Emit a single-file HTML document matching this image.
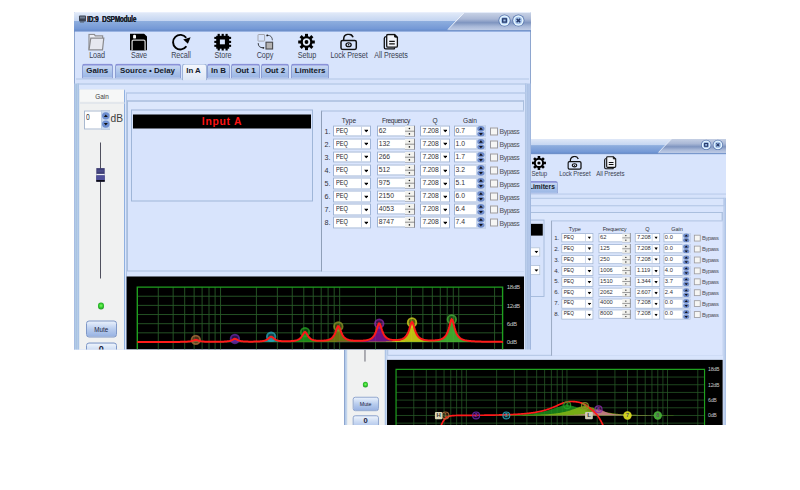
<!DOCTYPE html>
<html><head><meta charset="utf-8"><style>
html,body{margin:0;padding:0;background:#fff;}
body{width:800px;height:490px;overflow:hidden;position:relative;font-family:"Liberation Sans", sans-serif;}
</style></head><body>
<div style="position:absolute;left:344.2px;top:139.2px;width:381.8px;height:285.6px;overflow:hidden;">
<div style="position:absolute;left:0;top:0;width:457px;height:342px;overflow:hidden;background:#d8e4fc;transform-origin:0 0;transform:translate(-1.4px,-0.8px) scale(0.8445,0.8397);font-family:"Liberation Sans", sans-serif;">
<div style="position:absolute;left:0px;top:0px;width:1px;height:342px;background:#8ea6cf;"></div>
<div style="position:absolute;left:456px;top:0px;width:1px;height:342px;background:#8ea6cf;"></div>
<div style="position:absolute;left:0px;top:0px;width:457px;height:18.5px;background:linear-gradient(#e2eaf8 0%,#c4d5f1 44%,#8eaede 46%,#7599d6 85%,#5f88cc 100%);"></div>
<svg style="position:absolute;left:0;top:0" width="457" height="19" viewBox="0 0 457 19">
<defs><linearGradient id="tg2" x1="0" y1="0" x2="0" y2="1">
<stop offset="0" stop-color="#c9d3e6"/><stop offset="0.35" stop-color="#aab8d6"/><stop offset="0.55" stop-color="#7f95c0"/><stop offset="0.75" stop-color="#a8b8d8"/><stop offset="1" stop-color="#c6d2ea"/></linearGradient></defs>
<path d="M390 0 L457 0 L457 18.5 L373 18.5 Z" fill="url(#tg2)"/>
<path d="M390 0.3 L374 17" stroke="#eef3fb" stroke-width="1"/>
<rect x="0" y="17.6" width="457" height="1" fill="#6f90c8"/>
<circle cx="430.5" cy="8" r="6.1" fill="#5a78b0"/>
<circle cx="430.5" cy="8" r="5.2" fill="#e6f6ff"/>
<circle cx="430.5" cy="8" r="3.7" fill="#a6c4ec"/>
<rect x="428.7" y="6.3" width="3.6" height="3.3" fill="none" stroke="#263a6a" stroke-width="1.3"/>
<circle cx="444.4" cy="8" r="6.1" fill="#5a78b0"/>
<circle cx="444.4" cy="8" r="5.2" fill="#e6f6ff"/>
<circle cx="444.4" cy="8" r="3.7" fill="#a6c4ec"/>
<path d="M442.6 6.2 L446.2 9.8 M446.2 6.2 L442.6 9.8" stroke="#263a6a" stroke-width="1.5"/>
</svg>
<div style="position:absolute;left:4.5px;top:2.6px;width:7px;height:6px;background:#3a4252;border-radius:1px;"></div>
<div style="position:absolute;left:5.5px;top:3.6px;width:5px;height:2px;background:#707c90;"></div>
<div style="position:absolute;left:6px;top:8.6px;width:4px;height:1px;background:#505a6a;"></div>
<div style="position:absolute;left:13.4px;top:2.1px;text-align:left;white-space:nowrap;font-size:8.2px;font-weight:bold;color:#141a28;letter-spacing:-0.2px;word-spacing:2.5px;transform:scaleX(0.78);transform-origin:0 0;text-shadow:0.35px 0 0 #141a28;">ID:9 DSPModule</div>
<svg style="position:absolute;left:14.0px;top:20.5px" width="18" height="18" viewBox="0 0 18 18">
<path d="M1 16.3 L1 0.8 L6.3 0.8 L7.3 2.3 L14.6 2.3 L14.6 4.6" fill="#eceef4" stroke="#8e8e92" stroke-width="1.2"/>
<path d="M2.8 4.6 L15.8 4.6 L14.5 16.3 L1 16.3 Z" fill="#e6e8f0" stroke="#8a8a8e" stroke-width="1.2"/>
</svg>
<div style="position:absolute;left:-7.5px;top:37.0px;width:60px;text-align:center;white-space:nowrap;font-size:8.3px;color:#3a4252;letter-spacing:-0.1px;transform:scaleX(0.87);">Load</div>
<svg style="position:absolute;left:56.0px;top:20.5px" width="18" height="18" viewBox="0 0 18 18">
<path d="M0 0 L13.9 0 L17 2.9 L17 16.8 L0 16.8 Z" fill="#000"/>
<rect x="3.1" y="1.2" width="2.9" height="3.9" rx="1.2" fill="#fff"/>
<path d="M2.1 16.8 L2.1 8.2 Q2.1 6.7 3.6 6.7 L13.6 6.7 Q15.1 6.7 15.1 8.2 L15.1 16.8" fill="#000" stroke="#cfcfcf" stroke-width="1.3"/>
</svg>
<div style="position:absolute;left:34.5px;top:37.0px;width:60px;text-align:center;white-space:nowrap;font-size:8.3px;color:#3a4252;letter-spacing:-0.1px;transform:scaleX(0.87);">Save</div>
<svg style="position:absolute;left:98px;top:20.5px" width="19" height="18" viewBox="0 0 19 18">
<path d="M14.4 12.8 A7.3 7.3 0 1 1 14.2 4.3" fill="none" stroke="#000" stroke-width="1.9"/>
<path d="M11.2 5.9 L18.6 3.7 L15.9 10.3 Z" fill="#000"/>
</svg>
<div style="position:absolute;left:77px;top:37.0px;width:60px;text-align:center;white-space:nowrap;font-size:8.3px;color:#3a4252;letter-spacing:-0.1px;transform:scaleX(0.87);">Recall</div>
<svg style="position:absolute;left:140px;top:20.5px" width="18" height="18" viewBox="0 0 18 18">
<rect x="3.6" y="0.2" width="2.2" height="16.8" fill="#000"/><rect x="7.6" y="0.2" width="2.2" height="16.8" fill="#000"/><rect x="11.5" y="0.2" width="2.2" height="16.8" fill="#000"/><rect x="0.3" y="3.3500000000000005" width="16.8" height="2.1" fill="#000"/><rect x="0.3" y="7.3500000000000005" width="16.8" height="2.1" fill="#000"/><rect x="0.3" y="11.25" width="16.8" height="2.1" fill="#000"/><rect x="2.2" y="2.3" width="13" height="12.9" fill="#000"/><rect x="5.9" y="6" width="5" height="4.8" fill="#d8e4fc"/>
</svg>
<div style="position:absolute;left:119px;top:37.0px;width:60px;text-align:center;white-space:nowrap;font-size:8.3px;color:#3a4252;letter-spacing:-0.1px;transform:scaleX(0.87);">Store</div>
<svg style="position:absolute;left:182.5px;top:20.5px" width="18" height="18" viewBox="0 0 18 18">
<rect x="1" y="1" width="6.6" height="6.6" rx="0.5" fill="none" stroke="#a4a6ae" stroke-width="1"/>
<rect x="9" y="8.7" width="6.6" height="6.8" fill="#b4b2b2" stroke="#4a4a4e" stroke-width="1.1"/>
<path d="M10.2 1.8 Q15.2 1.6 15.4 6.8" fill="none" stroke="#555a62" stroke-width="1"/>
<circle cx="10.2" cy="1.9" r="0.9" fill="#222"/>
<path d="M1.2 9.6 Q1.2 14.3 6.2 14.3" fill="none" stroke="#3a3e46" stroke-width="1"/>
<circle cx="6.4" cy="14.3" r="0.9" fill="#222"/>
</svg>
<div style="position:absolute;left:161px;top:37.0px;width:60px;text-align:center;white-space:nowrap;font-size:8.3px;color:#3a4252;letter-spacing:-0.1px;transform:scaleX(0.87);">Copy</div>
<svg style="position:absolute;left:224.0px;top:20.5px" width="17" height="17" viewBox="0 0 17 17">
<rect x="7" y="0.2" width="3" height="4" fill="#000" transform="rotate(0 8.5 8.5)"/><rect x="7" y="0.2" width="3" height="4" fill="#000" transform="rotate(45 8.5 8.5)"/><rect x="7" y="0.2" width="3" height="4" fill="#000" transform="rotate(90 8.5 8.5)"/><rect x="7" y="0.2" width="3" height="4" fill="#000" transform="rotate(135 8.5 8.5)"/><rect x="7" y="0.2" width="3" height="4" fill="#000" transform="rotate(180 8.5 8.5)"/><rect x="7" y="0.2" width="3" height="4" fill="#000" transform="rotate(225 8.5 8.5)"/><rect x="7" y="0.2" width="3" height="4" fill="#000" transform="rotate(270 8.5 8.5)"/><rect x="7" y="0.2" width="3" height="4" fill="#000" transform="rotate(315 8.5 8.5)"/><circle cx="8.5" cy="8.5" r="6.1" fill="#000"/><circle cx="8.5" cy="8.5" r="3.7" fill="#e4ecfa"/><circle cx="8.5" cy="8.5" r="1.9" fill="#000"/>
</svg>
<div style="position:absolute;left:202.5px;top:37.0px;width:60px;text-align:center;white-space:nowrap;font-size:8.3px;color:#3a4252;letter-spacing:-0.1px;transform:scaleX(0.87);">Setup</div>
<svg style="position:absolute;left:266px;top:20.5px" width="18" height="17" viewBox="0 0 18 17">
<path d="M3.7 7 L3.7 5.8 A4.9 4.9 0 0 1 13.1 3.7" fill="none" stroke="#111" stroke-width="1.5"/>
<rect x="1" y="6.9" width="15.3" height="9" rx="1.6" fill="none" stroke="#111" stroke-width="1.5"/>
<ellipse cx="8.6" cy="11.3" rx="2.6" ry="1.9" fill="none" stroke="#111" stroke-width="1.3"/>
<circle cx="8.6" cy="11.3" r="0.7" fill="#111"/>
</svg>
<div style="position:absolute;left:245px;top:37.0px;width:60px;text-align:center;white-space:nowrap;font-size:8.3px;color:#3a4252;letter-spacing:-0.1px;transform:scaleX(0.87);">Lock Preset</div>
<svg style="position:absolute;left:309px;top:20.5px" width="16" height="17" viewBox="0 0 16 17">
<path d="M3 3.2 Q1.3 3.4 1.3 5 L1.3 14 Q1.3 15.3 2.6 15.3 L11.2 15.3 L11.8 14" fill="none" stroke="#111" stroke-width="1.3"/>
<path d="M5 1 L11.6 1 L14.4 3.8 L14.4 12.4 Q14.4 13.7 13.1 13.7 L5 13.7 Q3.7 13.7 3.7 12.4 L3.7 2.3 Q3.7 1 5 1 Z" fill="#f2f4fa" stroke="#111" stroke-width="1.3"/>
<path d="M11.4 1.2 L11.6 3.6 L14.2 3.8" fill="#111" stroke="#111" stroke-width="0.9"/>
<path d="M6.2 7.8 L11.8 7.8 M6.2 10.3 L11.8 10.3" stroke="#111" stroke-width="1.2"/>
</svg>
<div style="position:absolute;left:287px;top:37.0px;width:60px;text-align:center;white-space:nowrap;font-size:8.3px;color:#3a4252;letter-spacing:-0.1px;transform:scaleX(0.87);">All Presets</div>
<div style="position:absolute;left:2px;top:66px;width:452.5px;height:276px;background:#d6e2fb;border-top:1px solid #b4c8e6;"></div>
<div style="position:absolute;left:3px;top:70.5px;width:450px;height:272px;border-top:1px solid #a9bfdf;background:#d9e5fc;"></div>
<div style="position:absolute;left:7.5px;top:51.2px;width:31.5px;height:14.8px;background:linear-gradient(#c9d8f2 0%,#a9c2ea 60%,#9bb6e4 100%);border:1px solid #8d9fd4;border-top:2px solid #8a92d8;border-radius:3px 3px 0 0;box-sizing:border-box;"></div>
<div style="position:absolute;left:7.5px;top:52.9px;width:31.5px;text-align:center;white-space:nowrap;font-size:7.9px;font-weight:bold;color:#141a2a;">Gains</div>
<div style="position:absolute;left:40.5px;top:51.2px;width:66.0px;height:14.8px;background:linear-gradient(#c9d8f2 0%,#a9c2ea 60%,#9bb6e4 100%);border:1px solid #8d9fd4;border-top:2px solid #8a92d8;border-radius:3px 3px 0 0;box-sizing:border-box;"></div>
<div style="position:absolute;left:40.5px;top:52.9px;width:66.0px;text-align:center;white-space:nowrap;font-size:7.9px;font-weight:bold;color:#141a2a;">Source &bull; Delay</div>
<div style="position:absolute;left:108px;top:51px;width:23px;height:16px;background:linear-gradient(#f4f7fc,#dce6f6);border:1px solid #9fb4d8;border-bottom:none;border-radius:3px 3px 0 0;"></div>
<div style="position:absolute;left:108px;top:52.9px;width:23px;text-align:center;white-space:nowrap;font-size:7.9px;font-weight:bold;color:#141a2a;">In A</div>
<div style="position:absolute;left:133px;top:51.2px;width:23px;height:14.8px;background:linear-gradient(#c9d8f2 0%,#a9c2ea 60%,#9bb6e4 100%);border:1px solid #8d9fd4;border-top:2px solid #8a92d8;border-radius:3px 3px 0 0;box-sizing:border-box;"></div>
<div style="position:absolute;left:133px;top:52.9px;width:23px;text-align:center;white-space:nowrap;font-size:7.9px;font-weight:bold;color:#141a2a;">In B</div>
<div style="position:absolute;left:157px;top:51.2px;width:29px;height:14.8px;background:linear-gradient(#c9d8f2 0%,#a9c2ea 60%,#9bb6e4 100%);border:1px solid #8d9fd4;border-top:2px solid #8a92d8;border-radius:3px 3px 0 0;box-sizing:border-box;"></div>
<div style="position:absolute;left:157px;top:52.9px;width:29px;text-align:center;white-space:nowrap;font-size:7.9px;font-weight:bold;color:#141a2a;">Out 1</div>
<div style="position:absolute;left:187px;top:51.2px;width:28px;height:14.8px;background:linear-gradient(#c9d8f2 0%,#a9c2ea 60%,#9bb6e4 100%);border:1px solid #8d9fd4;border-top:2px solid #8a92d8;border-radius:3px 3px 0 0;box-sizing:border-box;"></div>
<div style="position:absolute;left:187px;top:52.9px;width:28px;text-align:center;white-space:nowrap;font-size:7.9px;font-weight:bold;color:#141a2a;">Out 2</div>
<div style="position:absolute;left:217px;top:51.2px;width:38px;height:14.8px;background:linear-gradient(#c9d8f2 0%,#a9c2ea 60%,#9bb6e4 100%);border:1px solid #8d9fd4;border-top:2px solid #8a92d8;border-radius:3px 3px 0 0;box-sizing:border-box;"></div>
<div style="position:absolute;left:217px;top:52.9px;width:38px;text-align:center;white-space:nowrap;font-size:7.9px;font-weight:bold;color:#141a2a;">Limiters</div>
<div style="position:absolute;left:0px;top:70.5px;width:5px;height:272px;background:linear-gradient(90deg,#9fb2dc 0px,#b2cceb 1.2px,#aac4de 2.6px,#b6cceb 3.6px,#a3bfe2 5px);"></div>
<div style="position:absolute;left:450.5px;top:70.5px;width:6.5px;height:272px;background:linear-gradient(90deg,#a9bfe4 0px,#b9cdec 1.5px,#a8bee2 3px,#bccfee 4px,#a6bce2 5.2px,#8ea6cf 6.5px);"></div>
<div style="position:absolute;left:5px;top:76.5px;width:46px;height:266px;background:#f0f1f1;border-left:1px solid #dfe8f0;border-top:1px solid #c8d6ec;border-right:1px solid #8fb0e0;box-sizing:border-box;"></div>
<div style="position:absolute;left:5.6px;top:77.2px;width:44.6px;height:12.3px;background:#f6f7f7;"></div>
<div style="position:absolute;left:5.6px;top:89.5px;width:45px;height:1px;background:#d6dee8;"></div>
<div style="position:absolute;left:5px;top:80.2px;width:46px;text-align:center;white-space:nowrap;font-size:6.4px;color:#404040;">Gain</div>
<div style="position:absolute;left:10px;top:97.8px;width:26px;height:19.3px;background:#fff;border:1px solid #a9b9d0;box-sizing:border-box;"></div>
<div style="position:absolute;left:11.6px;top:98.6px;text-align:left;white-space:nowrap;font-size:8.4px;color:#333;transform:scaleX(0.8);transform-origin:0 0;">0</div>
<svg style="position:absolute;left:26.5px;top:98px" width="9.5" height="19" viewBox="0 0 9.5 19">
<rect x="0" y="0" width="9.5" height="19" fill="#c8d8ee" stroke="#9fb4d4" stroke-width="0.6"/>
<ellipse cx="4.8" cy="5.3" rx="3.8" ry="3.6" fill="#6d8ed0"/><path d="M2.8 6.5 L4.8 4 L6.8 6.5 Z" fill="#111"/>
<ellipse cx="4.8" cy="13.6" rx="3.8" ry="3.6" fill="#6d8ed0"/><path d="M2.8 12.4 L4.8 15 L6.8 12.4 Z" fill="#111"/>
</svg>
<div style="position:absolute;left:36.6px;top:99.5px;text-align:left;white-space:nowrap;font-size:10.2px;color:#404040;">dB</div>
<div style="position:absolute;left:26.1px;top:129.8px;width:1.3px;height:136.7px;background:#50505e;"></div>
<svg style="position:absolute;left:22.2px;top:155.3px" width="9" height="14.5" viewBox="0 0 9 14.5">
<rect x="0.3" y="0.6" width="8.4" height="13.6" fill="#3c3c72"/><rect x="1.2" y="2.2" width="6.6" height="2.6" fill="#4a4a88"/><rect x="0.3" y="6.4" width="8.4" height="1.5" fill="#eceef4"/><rect x="0.3" y="7.9" width="8.4" height="4.6" fill="#50509a"/><rect x="0.3" y="12.5" width="8.4" height="1.7" fill="#0c0c18"/>
</svg>
<div style="position:absolute;left:23.5px;top:290px;width:6.5px;height:6.5px;border-radius:50%;background:radial-gradient(circle at 50% 45%,#7cff5c 0%,#2cc42c 45%,#2a6a2a 100%);"></div>
<div style="position:absolute;left:12px;top:308.3px;width:30.5px;height:16.7px;background:linear-gradient(#e8f0fc 0%,#b9cdee 50%,#98b2e2 100%);border:1px solid #7f98c8;border-radius:3px;box-sizing:border-box;"></div>
<div style="position:absolute;left:12px;top:312.5px;width:30.5px;text-align:center;white-space:nowrap;font-size:6.3px;color:#1a2240;">Mute</div>
<div style="position:absolute;left:12px;top:329.5px;width:30.5px;height:16.7px;background:linear-gradient(#eef4fc 0%,#c9d9f2 50%,#a8bfe8 100%);border:1px solid #7f98c8;border-radius:3px;box-sizing:border-box;"></div>
<div style="position:absolute;left:12px;top:330.5px;width:30.5px;text-align:center;white-space:nowrap;font-size:9px;font-weight:bold;color:#1a2240;">0</div>
<div style="position:absolute;left:52px;top:80px;width:399.7px;height:262px;border-top:1px solid #a8bedf;border-left:1px solid #b2c6e4;border-right:1px solid #b2c6e4;box-sizing:border-box;background:#d8e4fc;"></div>
<div style="position:absolute;left:53px;top:88px;width:397px;height:10.4px;border:1px solid #a9bedd;border-bottom:none;box-sizing:border-box;background:#dce7fc;"></div>
<div style="position:absolute;left:53px;top:88px;width:397px;height:170.5px;border:1px solid #a9bedd;box-sizing:border-box;"></div>
<div style="position:absolute;left:57px;top:96.5px;width:181.5px;height:92.5px;border:1px solid #9fb6d8;box-sizing:border-box;background:#d7e3fc;"></div>
<div style="position:absolute;left:59px;top:102px;width:178px;height:13.5px;background:#000;"></div>
<div style="position:absolute;left:59px;top:103.0px;width:178px;text-align:center;white-space:nowrap;font-size:10.3px;font-weight:bold;color:#ff1414;letter-spacing:0.75px;">Input B</div>
<div style="position:absolute;left:207px;top:129.7px;width:26.6px;height:11.4px;background:#fff;border:1px solid #aebfd8;box-sizing:border-box;"></div>
<svg style="position:absolute;left:226.5px;top:133.89999999999998px" width="5" height="3" viewBox="0 0 5 3"><path d="M0 0 L5 0 L2.5 3 Z" fill="#000"/></svg>
<div style="position:absolute;left:207px;top:151.4px;width:26.6px;height:11.4px;background:#fff;border:1px solid #aebfd8;box-sizing:border-box;"></div>
<svg style="position:absolute;left:226.5px;top:155.6px" width="5" height="3" viewBox="0 0 5 3"><path d="M0 0 L5 0 L2.5 3 Z" fill="#000"/></svg>
<div style="position:absolute;left:246.8px;top:98px;width:203.2px;height:160.5px;border-left:1px solid #8f9fb8;border-top:1px solid #a9bedd;box-sizing:border-box;background:#dae5fd;"></div>
<div style="position:absolute;left:250px;top:103.8px;width:50px;text-align:center;white-space:nowrap;font-size:6.6px;color:#303038;">Type</div>
<div style="position:absolute;left:297px;top:103.8px;width:50px;text-align:center;white-space:nowrap;font-size:6.6px;color:#303038;letter-spacing:-0.35px;">Frequency</div>
<div style="position:absolute;left:336px;top:103.8px;width:50px;text-align:center;white-space:nowrap;font-size:6.6px;color:#303038;">Q</div>
<div style="position:absolute;left:371px;top:103.8px;width:50px;text-align:center;white-space:nowrap;font-size:6.6px;color:#303038;">Gain</div>
<div style="position:absolute;left:250.5px;top:113.69999999999999px;text-align:left;white-space:nowrap;font-size:7.2px;color:#303038;">1.</div>
<div style="position:absolute;left:259.3px;top:112.6px;width:37.7px;height:11.8px;background:#fff;border:1px solid #9fb4d6;box-sizing:border-box;"></div>
<div style="position:absolute;left:286.5px;top:113.6px;width:1px;height:9.8px;background:#c4d0e4;"></div>
<div style="position:absolute;left:262.3px;top:114.19999999999999px;text-align:left;white-space:nowrap;font-size:7.1px;color:#202028;transform:scaleX(0.8);transform-origin:0 0;">PEQ</div>
<svg style="position:absolute;left:289.6px;top:117.40px" width="4.5" height="3" viewBox="0 0 4.5 3"><path d="M0 0 L4.5 0 L2.25 3 Z" fill="#000"/></svg>
<div style="position:absolute;left:303.4px;top:112.6px;width:37.6px;height:11.5px;background:#fff;border:1px solid #9fb4d6;box-sizing:border-box;"></div>
<div style="position:absolute;left:304.8px;top:114.0px;text-align:left;white-space:nowrap;font-size:6.8px;color:#303038;">62</div>
<svg style="position:absolute;left:330.8px;top:112.60px" width="10.5" height="11.5" viewBox="0 0 10.5 11.5">
<rect x="0" y="0.5" width="10.5" height="10.5" fill="#f2f2ee"/><rect x="0" y="5.2" width="10" height="1" fill="#909090"/>
<rect x="9.2" y="0" width="1.3" height="11.5" fill="#707078"/><rect x="0" y="10.6" width="10.5" height="0.9" fill="#8a8a90"/>
<circle cx="4.4" cy="3" r="0.8" fill="#222"/><circle cx="4.4" cy="8.4" r="0.8" fill="#222"/></svg>
<div style="position:absolute;left:346px;top:112.6px;width:30.4px;height:11.8px;background:#fff;border:1px solid #9fb4d6;box-sizing:border-box;"></div>
<div style="position:absolute;left:366px;top:113.6px;width:1px;height:9.8px;background:#c4d0e4;"></div>
<div style="position:absolute;left:348.5px;top:114.19999999999999px;text-align:left;white-space:nowrap;font-size:6.8px;color:#303038;letter-spacing:-0.2px;">7.208</div>
<svg style="position:absolute;left:368.9px;top:117.40px" width="4.5" height="3" viewBox="0 0 4.5 3"><path d="M0 0 L4.5 0 L2.25 3 Z" fill="#000"/></svg>
<div style="position:absolute;left:380.3px;top:112.6px;width:31.3px;height:11.8px;background:#fff;border:1px solid #9fb4d6;box-sizing:border-box;"></div>
<div style="position:absolute;left:381.6px;top:113.8px;text-align:left;white-space:nowrap;font-size:6.8px;color:#303038;">0.0</div>
<svg style="position:absolute;left:401.8px;top:112.60px" width="9.8" height="11.8" viewBox="0 0 9.8 11.8">
<rect x="0" y="0" width="9.8" height="11.8" fill="#c9d7ee"/>
<ellipse cx="4.9" cy="3.2" rx="3.6" ry="2.6" fill="#6f8ccb"/><path d="M3 4.2 L4.9 1.8 L6.8 4.2 Z" fill="#101018"/>
<ellipse cx="4.9" cy="8.6" rx="3.6" ry="2.6" fill="#6f8ccb"/><path d="M3 7.6 L4.9 10 L6.8 7.6 Z" fill="#101018"/>
</svg>
<div style="position:absolute;left:416px;top:114.89999999999999px;width:7.8px;height:7.8px;background:#f6f6f4;border:1px solid #9a9aa0;box-sizing:border-box;"></div>
<div style="position:absolute;left:425.6px;top:115.39999999999999px;text-align:left;white-space:nowrap;font-size:6.9px;color:#505058;letter-spacing:-0.5px;">Bypass</div>
<div style="position:absolute;left:250.5px;top:126.73999999999998px;text-align:left;white-space:nowrap;font-size:7.2px;color:#303038;">2.</div>
<div style="position:absolute;left:259.3px;top:125.63999999999999px;width:37.7px;height:11.8px;background:#fff;border:1px solid #9fb4d6;box-sizing:border-box;"></div>
<div style="position:absolute;left:286.5px;top:126.63999999999999px;width:1px;height:9.8px;background:#c4d0e4;"></div>
<div style="position:absolute;left:262.3px;top:127.23999999999998px;text-align:left;white-space:nowrap;font-size:7.1px;color:#202028;transform:scaleX(0.8);transform-origin:0 0;">PEQ</div>
<svg style="position:absolute;left:289.6px;top:130.44px" width="4.5" height="3" viewBox="0 0 4.5 3"><path d="M0 0 L4.5 0 L2.25 3 Z" fill="#000"/></svg>
<div style="position:absolute;left:303.4px;top:125.63999999999999px;width:37.6px;height:11.5px;background:#fff;border:1px solid #9fb4d6;box-sizing:border-box;"></div>
<div style="position:absolute;left:304.8px;top:127.03999999999999px;text-align:left;white-space:nowrap;font-size:6.8px;color:#303038;">125</div>
<svg style="position:absolute;left:330.8px;top:125.64px" width="10.5" height="11.5" viewBox="0 0 10.5 11.5">
<rect x="0" y="0.5" width="10.5" height="10.5" fill="#f2f2ee"/><rect x="0" y="5.2" width="10" height="1" fill="#909090"/>
<rect x="9.2" y="0" width="1.3" height="11.5" fill="#707078"/><rect x="0" y="10.6" width="10.5" height="0.9" fill="#8a8a90"/>
<circle cx="4.4" cy="3" r="0.8" fill="#222"/><circle cx="4.4" cy="8.4" r="0.8" fill="#222"/></svg>
<div style="position:absolute;left:346px;top:125.63999999999999px;width:30.4px;height:11.8px;background:#fff;border:1px solid #9fb4d6;box-sizing:border-box;"></div>
<div style="position:absolute;left:366px;top:126.63999999999999px;width:1px;height:9.8px;background:#c4d0e4;"></div>
<div style="position:absolute;left:348.5px;top:127.23999999999998px;text-align:left;white-space:nowrap;font-size:6.8px;color:#303038;letter-spacing:-0.2px;">7.208</div>
<svg style="position:absolute;left:368.9px;top:130.44px" width="4.5" height="3" viewBox="0 0 4.5 3"><path d="M0 0 L4.5 0 L2.25 3 Z" fill="#000"/></svg>
<div style="position:absolute;left:380.3px;top:125.63999999999999px;width:31.3px;height:11.8px;background:#fff;border:1px solid #9fb4d6;box-sizing:border-box;"></div>
<div style="position:absolute;left:381.6px;top:126.83999999999999px;text-align:left;white-space:nowrap;font-size:6.8px;color:#303038;">0.0</div>
<svg style="position:absolute;left:401.8px;top:125.64px" width="9.8" height="11.8" viewBox="0 0 9.8 11.8">
<rect x="0" y="0" width="9.8" height="11.8" fill="#c9d7ee"/>
<ellipse cx="4.9" cy="3.2" rx="3.6" ry="2.6" fill="#6f8ccb"/><path d="M3 4.2 L4.9 1.8 L6.8 4.2 Z" fill="#101018"/>
<ellipse cx="4.9" cy="8.6" rx="3.6" ry="2.6" fill="#6f8ccb"/><path d="M3 7.6 L4.9 10 L6.8 7.6 Z" fill="#101018"/>
</svg>
<div style="position:absolute;left:416px;top:127.93999999999998px;width:7.8px;height:7.8px;background:#f6f6f4;border:1px solid #9a9aa0;box-sizing:border-box;"></div>
<div style="position:absolute;left:425.6px;top:128.44px;text-align:left;white-space:nowrap;font-size:6.9px;color:#505058;letter-spacing:-0.5px;">Bypass</div>
<div style="position:absolute;left:250.5px;top:139.78px;text-align:left;white-space:nowrap;font-size:7.2px;color:#303038;">3.</div>
<div style="position:absolute;left:259.3px;top:138.68px;width:37.7px;height:11.8px;background:#fff;border:1px solid #9fb4d6;box-sizing:border-box;"></div>
<div style="position:absolute;left:286.5px;top:139.68px;width:1px;height:9.8px;background:#c4d0e4;"></div>
<div style="position:absolute;left:262.3px;top:140.28px;text-align:left;white-space:nowrap;font-size:7.1px;color:#202028;transform:scaleX(0.8);transform-origin:0 0;">PEQ</div>
<svg style="position:absolute;left:289.6px;top:143.48px" width="4.5" height="3" viewBox="0 0 4.5 3"><path d="M0 0 L4.5 0 L2.25 3 Z" fill="#000"/></svg>
<div style="position:absolute;left:303.4px;top:138.68px;width:37.6px;height:11.5px;background:#fff;border:1px solid #9fb4d6;box-sizing:border-box;"></div>
<div style="position:absolute;left:304.8px;top:140.08px;text-align:left;white-space:nowrap;font-size:6.8px;color:#303038;">250</div>
<svg style="position:absolute;left:330.8px;top:138.68px" width="10.5" height="11.5" viewBox="0 0 10.5 11.5">
<rect x="0" y="0.5" width="10.5" height="10.5" fill="#f2f2ee"/><rect x="0" y="5.2" width="10" height="1" fill="#909090"/>
<rect x="9.2" y="0" width="1.3" height="11.5" fill="#707078"/><rect x="0" y="10.6" width="10.5" height="0.9" fill="#8a8a90"/>
<circle cx="4.4" cy="3" r="0.8" fill="#222"/><circle cx="4.4" cy="8.4" r="0.8" fill="#222"/></svg>
<div style="position:absolute;left:346px;top:138.68px;width:30.4px;height:11.8px;background:#fff;border:1px solid #9fb4d6;box-sizing:border-box;"></div>
<div style="position:absolute;left:366px;top:139.68px;width:1px;height:9.8px;background:#c4d0e4;"></div>
<div style="position:absolute;left:348.5px;top:140.28px;text-align:left;white-space:nowrap;font-size:6.8px;color:#303038;letter-spacing:-0.2px;">7.208</div>
<svg style="position:absolute;left:368.9px;top:143.48px" width="4.5" height="3" viewBox="0 0 4.5 3"><path d="M0 0 L4.5 0 L2.25 3 Z" fill="#000"/></svg>
<div style="position:absolute;left:380.3px;top:138.68px;width:31.3px;height:11.8px;background:#fff;border:1px solid #9fb4d6;box-sizing:border-box;"></div>
<div style="position:absolute;left:381.6px;top:139.88px;text-align:left;white-space:nowrap;font-size:6.8px;color:#303038;">0.0</div>
<svg style="position:absolute;left:401.8px;top:138.68px" width="9.8" height="11.8" viewBox="0 0 9.8 11.8">
<rect x="0" y="0" width="9.8" height="11.8" fill="#c9d7ee"/>
<ellipse cx="4.9" cy="3.2" rx="3.6" ry="2.6" fill="#6f8ccb"/><path d="M3 4.2 L4.9 1.8 L6.8 4.2 Z" fill="#101018"/>
<ellipse cx="4.9" cy="8.6" rx="3.6" ry="2.6" fill="#6f8ccb"/><path d="M3 7.6 L4.9 10 L6.8 7.6 Z" fill="#101018"/>
</svg>
<div style="position:absolute;left:416px;top:140.98000000000002px;width:7.8px;height:7.8px;background:#f6f6f4;border:1px solid #9a9aa0;box-sizing:border-box;"></div>
<div style="position:absolute;left:425.6px;top:141.48000000000002px;text-align:left;white-space:nowrap;font-size:6.9px;color:#505058;letter-spacing:-0.5px;">Bypass</div>
<div style="position:absolute;left:250.5px;top:152.82px;text-align:left;white-space:nowrap;font-size:7.2px;color:#303038;">4.</div>
<div style="position:absolute;left:259.3px;top:151.72px;width:37.7px;height:11.8px;background:#fff;border:1px solid #9fb4d6;box-sizing:border-box;"></div>
<div style="position:absolute;left:286.5px;top:152.72px;width:1px;height:9.8px;background:#c4d0e4;"></div>
<div style="position:absolute;left:262.3px;top:153.32px;text-align:left;white-space:nowrap;font-size:7.1px;color:#202028;transform:scaleX(0.8);transform-origin:0 0;">PEQ</div>
<svg style="position:absolute;left:289.6px;top:156.52px" width="4.5" height="3" viewBox="0 0 4.5 3"><path d="M0 0 L4.5 0 L2.25 3 Z" fill="#000"/></svg>
<div style="position:absolute;left:303.4px;top:151.72px;width:37.6px;height:11.5px;background:#fff;border:1px solid #9fb4d6;box-sizing:border-box;"></div>
<div style="position:absolute;left:304.8px;top:153.12px;text-align:left;white-space:nowrap;font-size:6.8px;color:#303038;">1006</div>
<svg style="position:absolute;left:330.8px;top:151.72px" width="10.5" height="11.5" viewBox="0 0 10.5 11.5">
<rect x="0" y="0.5" width="10.5" height="10.5" fill="#f2f2ee"/><rect x="0" y="5.2" width="10" height="1" fill="#909090"/>
<rect x="9.2" y="0" width="1.3" height="11.5" fill="#707078"/><rect x="0" y="10.6" width="10.5" height="0.9" fill="#8a8a90"/>
<circle cx="4.4" cy="3" r="0.8" fill="#222"/><circle cx="4.4" cy="8.4" r="0.8" fill="#222"/></svg>
<div style="position:absolute;left:346px;top:151.72px;width:30.4px;height:11.8px;background:#fff;border:1px solid #9fb4d6;box-sizing:border-box;"></div>
<div style="position:absolute;left:366px;top:152.72px;width:1px;height:9.8px;background:#c4d0e4;"></div>
<div style="position:absolute;left:348.5px;top:153.32px;text-align:left;white-space:nowrap;font-size:6.8px;color:#303038;letter-spacing:-0.2px;">1.119</div>
<svg style="position:absolute;left:368.9px;top:156.52px" width="4.5" height="3" viewBox="0 0 4.5 3"><path d="M0 0 L4.5 0 L2.25 3 Z" fill="#000"/></svg>
<div style="position:absolute;left:380.3px;top:151.72px;width:31.3px;height:11.8px;background:#fff;border:1px solid #9fb4d6;box-sizing:border-box;"></div>
<div style="position:absolute;left:381.6px;top:152.92px;text-align:left;white-space:nowrap;font-size:6.8px;color:#303038;">4.0</div>
<svg style="position:absolute;left:401.8px;top:151.72px" width="9.8" height="11.8" viewBox="0 0 9.8 11.8">
<rect x="0" y="0" width="9.8" height="11.8" fill="#c9d7ee"/>
<ellipse cx="4.9" cy="3.2" rx="3.6" ry="2.6" fill="#6f8ccb"/><path d="M3 4.2 L4.9 1.8 L6.8 4.2 Z" fill="#101018"/>
<ellipse cx="4.9" cy="8.6" rx="3.6" ry="2.6" fill="#6f8ccb"/><path d="M3 7.6 L4.9 10 L6.8 7.6 Z" fill="#101018"/>
</svg>
<div style="position:absolute;left:416px;top:154.02px;width:7.8px;height:7.8px;background:#f6f6f4;border:1px solid #9a9aa0;box-sizing:border-box;"></div>
<div style="position:absolute;left:425.6px;top:154.52px;text-align:left;white-space:nowrap;font-size:6.9px;color:#505058;letter-spacing:-0.5px;">Bypass</div>
<div style="position:absolute;left:250.5px;top:165.85999999999999px;text-align:left;white-space:nowrap;font-size:7.2px;color:#303038;">5.</div>
<div style="position:absolute;left:259.3px;top:164.76px;width:37.7px;height:11.8px;background:#fff;border:1px solid #9fb4d6;box-sizing:border-box;"></div>
<div style="position:absolute;left:286.5px;top:165.76px;width:1px;height:9.8px;background:#c4d0e4;"></div>
<div style="position:absolute;left:262.3px;top:166.35999999999999px;text-align:left;white-space:nowrap;font-size:7.1px;color:#202028;transform:scaleX(0.8);transform-origin:0 0;">PEQ</div>
<svg style="position:absolute;left:289.6px;top:169.56px" width="4.5" height="3" viewBox="0 0 4.5 3"><path d="M0 0 L4.5 0 L2.25 3 Z" fill="#000"/></svg>
<div style="position:absolute;left:303.4px;top:164.76px;width:37.6px;height:11.5px;background:#fff;border:1px solid #9fb4d6;box-sizing:border-box;"></div>
<div style="position:absolute;left:304.8px;top:166.16px;text-align:left;white-space:nowrap;font-size:6.8px;color:#303038;">1510</div>
<svg style="position:absolute;left:330.8px;top:164.76px" width="10.5" height="11.5" viewBox="0 0 10.5 11.5">
<rect x="0" y="0.5" width="10.5" height="10.5" fill="#f2f2ee"/><rect x="0" y="5.2" width="10" height="1" fill="#909090"/>
<rect x="9.2" y="0" width="1.3" height="11.5" fill="#707078"/><rect x="0" y="10.6" width="10.5" height="0.9" fill="#8a8a90"/>
<circle cx="4.4" cy="3" r="0.8" fill="#222"/><circle cx="4.4" cy="8.4" r="0.8" fill="#222"/></svg>
<div style="position:absolute;left:346px;top:164.76px;width:30.4px;height:11.8px;background:#fff;border:1px solid #9fb4d6;box-sizing:border-box;"></div>
<div style="position:absolute;left:366px;top:165.76px;width:1px;height:9.8px;background:#c4d0e4;"></div>
<div style="position:absolute;left:348.5px;top:166.35999999999999px;text-align:left;white-space:nowrap;font-size:6.8px;color:#303038;letter-spacing:-0.2px;">1.344</div>
<svg style="position:absolute;left:368.9px;top:169.56px" width="4.5" height="3" viewBox="0 0 4.5 3"><path d="M0 0 L4.5 0 L2.25 3 Z" fill="#000"/></svg>
<div style="position:absolute;left:380.3px;top:164.76px;width:31.3px;height:11.8px;background:#fff;border:1px solid #9fb4d6;box-sizing:border-box;"></div>
<div style="position:absolute;left:381.6px;top:165.95999999999998px;text-align:left;white-space:nowrap;font-size:6.8px;color:#303038;">3.7</div>
<svg style="position:absolute;left:401.8px;top:164.76px" width="9.8" height="11.8" viewBox="0 0 9.8 11.8">
<rect x="0" y="0" width="9.8" height="11.8" fill="#c9d7ee"/>
<ellipse cx="4.9" cy="3.2" rx="3.6" ry="2.6" fill="#6f8ccb"/><path d="M3 4.2 L4.9 1.8 L6.8 4.2 Z" fill="#101018"/>
<ellipse cx="4.9" cy="8.6" rx="3.6" ry="2.6" fill="#6f8ccb"/><path d="M3 7.6 L4.9 10 L6.8 7.6 Z" fill="#101018"/>
</svg>
<div style="position:absolute;left:416px;top:167.06px;width:7.8px;height:7.8px;background:#f6f6f4;border:1px solid #9a9aa0;box-sizing:border-box;"></div>
<div style="position:absolute;left:425.6px;top:167.56px;text-align:left;white-space:nowrap;font-size:6.9px;color:#505058;letter-spacing:-0.5px;">Bypass</div>
<div style="position:absolute;left:250.5px;top:178.89999999999998px;text-align:left;white-space:nowrap;font-size:7.2px;color:#303038;">6.</div>
<div style="position:absolute;left:259.3px;top:177.79999999999998px;width:37.7px;height:11.8px;background:#fff;border:1px solid #9fb4d6;box-sizing:border-box;"></div>
<div style="position:absolute;left:286.5px;top:178.79999999999998px;width:1px;height:9.8px;background:#c4d0e4;"></div>
<div style="position:absolute;left:262.3px;top:179.39999999999998px;text-align:left;white-space:nowrap;font-size:7.1px;color:#202028;transform:scaleX(0.8);transform-origin:0 0;">PEQ</div>
<svg style="position:absolute;left:289.6px;top:182.60px" width="4.5" height="3" viewBox="0 0 4.5 3"><path d="M0 0 L4.5 0 L2.25 3 Z" fill="#000"/></svg>
<div style="position:absolute;left:303.4px;top:177.79999999999998px;width:37.6px;height:11.5px;background:#fff;border:1px solid #9fb4d6;box-sizing:border-box;"></div>
<div style="position:absolute;left:304.8px;top:179.2px;text-align:left;white-space:nowrap;font-size:6.8px;color:#303038;">2062</div>
<svg style="position:absolute;left:330.8px;top:177.80px" width="10.5" height="11.5" viewBox="0 0 10.5 11.5">
<rect x="0" y="0.5" width="10.5" height="10.5" fill="#f2f2ee"/><rect x="0" y="5.2" width="10" height="1" fill="#909090"/>
<rect x="9.2" y="0" width="1.3" height="11.5" fill="#707078"/><rect x="0" y="10.6" width="10.5" height="0.9" fill="#8a8a90"/>
<circle cx="4.4" cy="3" r="0.8" fill="#222"/><circle cx="4.4" cy="8.4" r="0.8" fill="#222"/></svg>
<div style="position:absolute;left:346px;top:177.79999999999998px;width:30.4px;height:11.8px;background:#fff;border:1px solid #9fb4d6;box-sizing:border-box;"></div>
<div style="position:absolute;left:366px;top:178.79999999999998px;width:1px;height:9.8px;background:#c4d0e4;"></div>
<div style="position:absolute;left:348.5px;top:179.39999999999998px;text-align:left;white-space:nowrap;font-size:6.8px;color:#303038;letter-spacing:-0.2px;">2.607</div>
<svg style="position:absolute;left:368.9px;top:182.60px" width="4.5" height="3" viewBox="0 0 4.5 3"><path d="M0 0 L4.5 0 L2.25 3 Z" fill="#000"/></svg>
<div style="position:absolute;left:380.3px;top:177.79999999999998px;width:31.3px;height:11.8px;background:#fff;border:1px solid #9fb4d6;box-sizing:border-box;"></div>
<div style="position:absolute;left:381.6px;top:178.99999999999997px;text-align:left;white-space:nowrap;font-size:6.8px;color:#303038;">2.4</div>
<svg style="position:absolute;left:401.8px;top:177.80px" width="9.8" height="11.8" viewBox="0 0 9.8 11.8">
<rect x="0" y="0" width="9.8" height="11.8" fill="#c9d7ee"/>
<ellipse cx="4.9" cy="3.2" rx="3.6" ry="2.6" fill="#6f8ccb"/><path d="M3 4.2 L4.9 1.8 L6.8 4.2 Z" fill="#101018"/>
<ellipse cx="4.9" cy="8.6" rx="3.6" ry="2.6" fill="#6f8ccb"/><path d="M3 7.6 L4.9 10 L6.8 7.6 Z" fill="#101018"/>
</svg>
<div style="position:absolute;left:416px;top:180.1px;width:7.8px;height:7.8px;background:#f6f6f4;border:1px solid #9a9aa0;box-sizing:border-box;"></div>
<div style="position:absolute;left:425.6px;top:180.6px;text-align:left;white-space:nowrap;font-size:6.9px;color:#505058;letter-spacing:-0.5px;">Bypass</div>
<div style="position:absolute;left:250.5px;top:191.93999999999997px;text-align:left;white-space:nowrap;font-size:7.2px;color:#303038;">7.</div>
<div style="position:absolute;left:259.3px;top:190.83999999999997px;width:37.7px;height:11.8px;background:#fff;border:1px solid #9fb4d6;box-sizing:border-box;"></div>
<div style="position:absolute;left:286.5px;top:191.83999999999997px;width:1px;height:9.8px;background:#c4d0e4;"></div>
<div style="position:absolute;left:262.3px;top:192.43999999999997px;text-align:left;white-space:nowrap;font-size:7.1px;color:#202028;transform:scaleX(0.8);transform-origin:0 0;">PEQ</div>
<svg style="position:absolute;left:289.6px;top:195.64px" width="4.5" height="3" viewBox="0 0 4.5 3"><path d="M0 0 L4.5 0 L2.25 3 Z" fill="#000"/></svg>
<div style="position:absolute;left:303.4px;top:190.83999999999997px;width:37.6px;height:11.5px;background:#fff;border:1px solid #9fb4d6;box-sizing:border-box;"></div>
<div style="position:absolute;left:304.8px;top:192.23999999999998px;text-align:left;white-space:nowrap;font-size:6.8px;color:#303038;">4000</div>
<svg style="position:absolute;left:330.8px;top:190.84px" width="10.5" height="11.5" viewBox="0 0 10.5 11.5">
<rect x="0" y="0.5" width="10.5" height="10.5" fill="#f2f2ee"/><rect x="0" y="5.2" width="10" height="1" fill="#909090"/>
<rect x="9.2" y="0" width="1.3" height="11.5" fill="#707078"/><rect x="0" y="10.6" width="10.5" height="0.9" fill="#8a8a90"/>
<circle cx="4.4" cy="3" r="0.8" fill="#222"/><circle cx="4.4" cy="8.4" r="0.8" fill="#222"/></svg>
<div style="position:absolute;left:346px;top:190.83999999999997px;width:30.4px;height:11.8px;background:#fff;border:1px solid #9fb4d6;box-sizing:border-box;"></div>
<div style="position:absolute;left:366px;top:191.83999999999997px;width:1px;height:9.8px;background:#c4d0e4;"></div>
<div style="position:absolute;left:348.5px;top:192.43999999999997px;text-align:left;white-space:nowrap;font-size:6.8px;color:#303038;letter-spacing:-0.2px;">7.208</div>
<svg style="position:absolute;left:368.9px;top:195.64px" width="4.5" height="3" viewBox="0 0 4.5 3"><path d="M0 0 L4.5 0 L2.25 3 Z" fill="#000"/></svg>
<div style="position:absolute;left:380.3px;top:190.83999999999997px;width:31.3px;height:11.8px;background:#fff;border:1px solid #9fb4d6;box-sizing:border-box;"></div>
<div style="position:absolute;left:381.6px;top:192.03999999999996px;text-align:left;white-space:nowrap;font-size:6.8px;color:#303038;">0.0</div>
<svg style="position:absolute;left:401.8px;top:190.84px" width="9.8" height="11.8" viewBox="0 0 9.8 11.8">
<rect x="0" y="0" width="9.8" height="11.8" fill="#c9d7ee"/>
<ellipse cx="4.9" cy="3.2" rx="3.6" ry="2.6" fill="#6f8ccb"/><path d="M3 4.2 L4.9 1.8 L6.8 4.2 Z" fill="#101018"/>
<ellipse cx="4.9" cy="8.6" rx="3.6" ry="2.6" fill="#6f8ccb"/><path d="M3 7.6 L4.9 10 L6.8 7.6 Z" fill="#101018"/>
</svg>
<div style="position:absolute;left:416px;top:193.14px;width:7.8px;height:7.8px;background:#f6f6f4;border:1px solid #9a9aa0;box-sizing:border-box;"></div>
<div style="position:absolute;left:425.6px;top:193.64px;text-align:left;white-space:nowrap;font-size:6.9px;color:#505058;letter-spacing:-0.5px;">Bypass</div>
<div style="position:absolute;left:250.5px;top:204.98px;text-align:left;white-space:nowrap;font-size:7.2px;color:#303038;">8.</div>
<div style="position:absolute;left:259.3px;top:203.88px;width:37.7px;height:11.8px;background:#fff;border:1px solid #9fb4d6;box-sizing:border-box;"></div>
<div style="position:absolute;left:286.5px;top:204.88px;width:1px;height:9.8px;background:#c4d0e4;"></div>
<div style="position:absolute;left:262.3px;top:205.48px;text-align:left;white-space:nowrap;font-size:7.1px;color:#202028;transform:scaleX(0.8);transform-origin:0 0;">PEQ</div>
<svg style="position:absolute;left:289.6px;top:208.68px" width="4.5" height="3" viewBox="0 0 4.5 3"><path d="M0 0 L4.5 0 L2.25 3 Z" fill="#000"/></svg>
<div style="position:absolute;left:303.4px;top:203.88px;width:37.6px;height:11.5px;background:#fff;border:1px solid #9fb4d6;box-sizing:border-box;"></div>
<div style="position:absolute;left:304.8px;top:205.28px;text-align:left;white-space:nowrap;font-size:6.8px;color:#303038;">8000</div>
<svg style="position:absolute;left:330.8px;top:203.88px" width="10.5" height="11.5" viewBox="0 0 10.5 11.5">
<rect x="0" y="0.5" width="10.5" height="10.5" fill="#f2f2ee"/><rect x="0" y="5.2" width="10" height="1" fill="#909090"/>
<rect x="9.2" y="0" width="1.3" height="11.5" fill="#707078"/><rect x="0" y="10.6" width="10.5" height="0.9" fill="#8a8a90"/>
<circle cx="4.4" cy="3" r="0.8" fill="#222"/><circle cx="4.4" cy="8.4" r="0.8" fill="#222"/></svg>
<div style="position:absolute;left:346px;top:203.88px;width:30.4px;height:11.8px;background:#fff;border:1px solid #9fb4d6;box-sizing:border-box;"></div>
<div style="position:absolute;left:366px;top:204.88px;width:1px;height:9.8px;background:#c4d0e4;"></div>
<div style="position:absolute;left:348.5px;top:205.48px;text-align:left;white-space:nowrap;font-size:6.8px;color:#303038;letter-spacing:-0.2px;">7.208</div>
<svg style="position:absolute;left:368.9px;top:208.68px" width="4.5" height="3" viewBox="0 0 4.5 3"><path d="M0 0 L4.5 0 L2.25 3 Z" fill="#000"/></svg>
<div style="position:absolute;left:380.3px;top:203.88px;width:31.3px;height:11.8px;background:#fff;border:1px solid #9fb4d6;box-sizing:border-box;"></div>
<div style="position:absolute;left:381.6px;top:205.07999999999998px;text-align:left;white-space:nowrap;font-size:6.8px;color:#303038;">0.0</div>
<svg style="position:absolute;left:401.8px;top:203.88px" width="9.8" height="11.8" viewBox="0 0 9.8 11.8">
<rect x="0" y="0" width="9.8" height="11.8" fill="#c9d7ee"/>
<ellipse cx="4.9" cy="3.2" rx="3.6" ry="2.6" fill="#6f8ccb"/><path d="M3 4.2 L4.9 1.8 L6.8 4.2 Z" fill="#101018"/>
<ellipse cx="4.9" cy="8.6" rx="3.6" ry="2.6" fill="#6f8ccb"/><path d="M3 7.6 L4.9 10 L6.8 7.6 Z" fill="#101018"/>
</svg>
<div style="position:absolute;left:416px;top:206.18px;width:7.8px;height:7.8px;background:#f6f6f4;border:1px solid #9a9aa0;box-sizing:border-box;"></div>
<div style="position:absolute;left:425.6px;top:206.68px;text-align:left;white-space:nowrap;font-size:6.9px;color:#505058;letter-spacing:-0.5px;">Bypass</div>
<svg style="position:absolute;left:0;top:0" width="457" height="342" viewBox="0 0 457 342"><rect x="52.6" y="264" width="397.4" height="90" fill="#000"/><line x1="63.3" y1="284.45" x2="428.6" y2="284.45" stroke="#285a28" stroke-width="0.9"/><line x1="63.3" y1="293.60" x2="428.6" y2="293.60" stroke="#285a28" stroke-width="0.9"/><line x1="63.3" y1="302.75" x2="428.6" y2="302.75" stroke="#285a28" stroke-width="0.9"/><line x1="63.3" y1="311.90" x2="428.6" y2="311.90" stroke="#285a28" stroke-width="0.9"/><line x1="63.3" y1="321.05" x2="428.6" y2="321.05" stroke="#285a28" stroke-width="0.9"/><line x1="63.3" y1="330.20" x2="428.6" y2="330.20" stroke="#285a28" stroke-width="0.9"/><line x1="63.3" y1="339.35" x2="428.6" y2="339.35" stroke="#285a28" stroke-width="0.9"/><line x1="63.3" y1="348.50" x2="428.6" y2="348.50" stroke="#285a28" stroke-width="0.9"/><line x1="84.27" y1="275.29999999999995" x2="84.27" y2="360" stroke="#285a28" stroke-width="0.9"/><line x1="99.15" y1="275.29999999999995" x2="99.15" y2="360" stroke="#285a28" stroke-width="0.9"/><line x1="110.69" y1="275.29999999999995" x2="110.69" y2="360" stroke="#285a28" stroke-width="0.9"/><line x1="120.13" y1="275.29999999999995" x2="120.13" y2="360" stroke="#285a28" stroke-width="0.9"/><line x1="128.10" y1="275.29999999999995" x2="128.10" y2="360" stroke="#285a28" stroke-width="0.9"/><line x1="135.01" y1="275.29999999999995" x2="135.01" y2="360" stroke="#285a28" stroke-width="0.9"/><line x1="141.10" y1="275.29999999999995" x2="141.10" y2="360" stroke="#285a28" stroke-width="0.9"/><line x1="146.55" y1="275.29999999999995" x2="146.55" y2="360" stroke="#285a28" stroke-width="0.9"/><line x1="182.40" y1="275.29999999999995" x2="182.40" y2="360" stroke="#285a28" stroke-width="0.9"/><line x1="203.37" y1="275.29999999999995" x2="203.37" y2="360" stroke="#285a28" stroke-width="0.9"/><line x1="218.25" y1="275.29999999999995" x2="218.25" y2="360" stroke="#285a28" stroke-width="0.9"/><line x1="229.79" y1="275.29999999999995" x2="229.79" y2="360" stroke="#285a28" stroke-width="0.9"/><line x1="239.23" y1="275.29999999999995" x2="239.23" y2="360" stroke="#285a28" stroke-width="0.9"/><line x1="247.20" y1="275.29999999999995" x2="247.20" y2="360" stroke="#285a28" stroke-width="0.9"/><line x1="254.11" y1="275.29999999999995" x2="254.11" y2="360" stroke="#285a28" stroke-width="0.9"/><line x1="260.20" y1="275.29999999999995" x2="260.20" y2="360" stroke="#285a28" stroke-width="0.9"/><line x1="265.65" y1="275.29999999999995" x2="265.65" y2="360" stroke="#285a28" stroke-width="0.9"/><line x1="301.50" y1="275.29999999999995" x2="301.50" y2="360" stroke="#285a28" stroke-width="0.9"/><line x1="322.47" y1="275.29999999999995" x2="322.47" y2="360" stroke="#285a28" stroke-width="0.9"/><line x1="337.35" y1="275.29999999999995" x2="337.35" y2="360" stroke="#285a28" stroke-width="0.9"/><line x1="348.89" y1="275.29999999999995" x2="348.89" y2="360" stroke="#285a28" stroke-width="0.9"/><line x1="358.33" y1="275.29999999999995" x2="358.33" y2="360" stroke="#285a28" stroke-width="0.9"/><line x1="366.30" y1="275.29999999999995" x2="366.30" y2="360" stroke="#285a28" stroke-width="0.9"/><line x1="373.21" y1="275.29999999999995" x2="373.21" y2="360" stroke="#285a28" stroke-width="0.9"/><line x1="379.30" y1="275.29999999999995" x2="379.30" y2="360" stroke="#285a28" stroke-width="0.9"/><line x1="384.75" y1="275.29999999999995" x2="384.75" y2="360" stroke="#285a28" stroke-width="0.9"/><line x1="420.60" y1="275.29999999999995" x2="420.60" y2="360" stroke="#285a28" stroke-width="0.9"/><path d="M63.3 360 L63.3 275.29999999999995 L428.6 275.29999999999995 L428.6 360" fill="none" stroke="#1fa01f" stroke-width="1.4"/><text x="432.7" y="277.60" font-family="Liberation Sans" font-size="6.2" letter-spacing="-0.3" fill="#c4c4c4">18dB</text><text x="432.7" y="295.90" font-family="Liberation Sans" font-size="6.2" letter-spacing="-0.3" fill="#c4c4c4">12dB</text><text x="432.7" y="314.20" font-family="Liberation Sans" font-size="6.2" letter-spacing="-0.3" fill="#c4c4c4">6dB</text><text x="432.7" y="332.50" font-family="Liberation Sans" font-size="6.2" letter-spacing="-0.3" fill="#c4c4c4">0dB</text><path d="M144.63 330.2 L144.63 330.11 L145.37 330.10 L146.10 330.10 L146.83 330.10 L147.57 330.10 L148.30 330.09 L149.03 330.09 L149.76 330.09 L150.50 330.08 L151.23 330.08 L151.96 330.08 L152.69 330.07 L153.43 330.07 L154.16 330.06 L154.89 330.06 L155.63 330.06 L156.36 330.05 L157.09 330.05 L157.82 330.04 L158.56 330.04 L159.29 330.03 L160.02 330.03 L160.75 330.02 L161.49 330.02 L162.22 330.01 L162.95 330.01 L163.69 330.00 L164.42 330.00 L165.15 329.99 L165.88 329.98 L166.62 329.98 L167.35 329.97 L168.08 329.96 L168.81 329.96 L169.55 329.95 L170.28 329.94 L171.01 329.94 L171.75 329.93 L172.48 329.92 L173.21 329.91 L173.94 329.90 L174.68 329.89 L175.41 329.89 L176.14 329.88 L176.87 329.87 L177.61 329.86 L178.34 329.85 L179.07 329.84 L179.81 329.82 L180.54 329.81 L181.27 329.80 L182.00 329.79 L182.74 329.78 L183.47 329.77 L184.20 329.75 L184.93 329.74 L185.67 329.72 L186.40 329.71 L187.13 329.70 L187.87 329.68 L188.60 329.66 L189.33 329.65 L190.06 329.63 L190.80 329.61 L191.53 329.60 L192.26 329.58 L192.99 329.56 L193.73 329.54 L194.46 329.52 L195.19 329.50 L195.93 329.48 L196.66 329.45 L197.39 329.43 L198.12 329.41 L198.86 329.38 L199.59 329.36 L200.32 329.33 L201.06 329.30 L201.79 329.28 L202.52 329.25 L203.25 329.22 L203.99 329.19 L204.72 329.15 L205.45 329.12 L206.18 329.09 L206.92 329.05 L207.65 329.01 L208.38 328.98 L209.12 328.94 L209.85 328.90 L210.58 328.86 L211.31 328.81 L212.05 328.77 L212.78 328.72 L213.51 328.67 L214.24 328.62 L214.98 328.57 L215.71 328.52 L216.44 328.46 L217.18 328.41 L217.91 328.35 L218.64 328.28 L219.37 328.22 L220.11 328.15 L220.84 328.09 L221.57 328.01 L222.30 327.94 L223.04 327.86 L223.77 327.79 L224.50 327.70 L225.24 327.62 L225.97 327.53 L226.70 327.44 L227.43 327.34 L228.17 327.24 L228.90 327.14 L229.63 327.04 L230.36 326.93 L231.10 326.81 L231.83 326.69 L232.56 326.57 L233.30 326.44 L234.03 326.31 L234.76 326.17 L235.49 326.03 L236.23 325.88 L236.96 325.73 L237.69 325.57 L238.42 325.41 L239.16 325.24 L239.89 325.06 L240.62 324.88 L241.36 324.70 L242.09 324.50 L242.82 324.30 L243.55 324.10 L244.29 323.89 L245.02 323.67 L245.75 323.45 L246.48 323.22 L247.22 322.99 L247.95 322.75 L248.68 322.50 L249.42 322.26 L250.15 322.00 L250.88 321.75 L251.61 321.49 L252.35 321.23 L253.08 320.98 L253.81 320.72 L254.55 320.46 L255.28 320.21 L256.01 319.97 L256.74 319.73 L257.48 319.49 L258.21 319.27 L258.94 319.06 L259.67 318.87 L260.41 318.69 L261.14 318.53 L261.87 318.38 L262.61 318.26 L263.34 318.16 L264.07 318.08 L264.80 318.03 L265.54 318.00 L266.27 318.00 L267.00 318.03 L267.73 318.07 L268.47 318.15 L269.20 318.24 L269.93 318.36 L270.67 318.50 L271.40 318.66 L272.13 318.84 L272.86 319.03 L273.60 319.24 L274.33 319.46 L275.06 319.69 L275.79 319.93 L276.53 320.18 L277.26 320.43 L277.99 320.68 L278.73 320.94 L279.46 321.20 L280.19 321.45 L280.92 321.71 L281.66 321.97 L282.39 322.22 L283.12 322.47 L283.85 322.71 L284.59 322.95 L285.32 323.19 L286.05 323.41 L286.79 323.64 L287.52 323.86 L288.25 324.07 L288.98 324.27 L289.72 324.47 L290.45 324.67 L291.18 324.86 L291.91 325.04 L292.65 325.21 L293.38 325.38 L294.11 325.55 L294.85 325.71 L295.58 325.86 L296.31 326.01 L297.04 326.15 L297.78 326.29 L298.51 326.42 L299.24 326.55 L299.97 326.67 L300.71 326.79 L301.44 326.91 L302.17 327.02 L302.91 327.13 L303.64 327.23 L304.37 327.33 L305.10 327.42 L305.84 327.52 L306.57 327.60 L307.30 327.69 L308.03 327.77 L308.77 327.85 L309.50 327.93 L310.23 328.00 L310.97 328.08 L311.70 328.14 L312.43 328.21 L313.16 328.27 L313.90 328.34 L314.63 328.40 L315.36 328.45 L316.10 328.51 L316.83 328.56 L317.56 328.62 L318.29 328.67 L319.03 328.71 L319.76 328.76 L320.49 328.81 L321.22 328.85 L321.96 328.89 L322.69 328.93 L323.42 328.97 L324.16 329.01 L324.89 329.05 L325.62 329.08 L326.35 329.12 L327.09 329.15 L327.82 329.18 L328.55 329.21 L329.28 329.24 L330.02 329.27 L330.75 329.30 L331.48 329.33 L332.22 329.35 L332.95 329.38 L333.68 329.40 L334.41 329.43 L335.15 329.45 L335.88 329.47 L336.61 329.49 L337.34 329.52 L338.08 329.54 L338.81 329.56 L339.54 329.58 L340.28 329.59 L341.01 329.61 L341.74 329.63 L342.47 329.65 L343.21 329.66 L343.94 329.68 L344.67 329.69 L345.40 329.71 L346.14 329.72 L346.87 329.74 L347.60 329.75 L348.34 329.76 L349.07 329.78 L349.80 329.79 L350.53 329.80 L351.27 329.81 L352.00 329.82 L352.73 329.83 L353.46 329.84 L354.20 329.85 L354.93 329.86 L355.66 329.87 L356.40 329.88 L357.13 329.89 L357.86 329.90 L358.59 329.91 L359.33 329.92 L360.06 329.93 L360.79 329.93 L361.52 329.94 L362.26 329.95 L362.99 329.96 L363.72 329.96 L364.46 329.97 L365.19 329.98 L365.92 329.98 L366.65 329.99 L367.39 330.00 L368.12 330.00 L368.85 330.01 L369.59 330.01 L370.32 330.02 L371.05 330.02 L371.78 330.03 L372.52 330.03 L373.25 330.04 L373.98 330.04 L374.71 330.05 L375.45 330.05 L376.18 330.06 L376.91 330.06 L377.65 330.06 L378.38 330.07 L379.11 330.07 L379.84 330.07 L380.58 330.08 L381.31 330.08 L382.04 330.09 L382.77 330.09 L383.51 330.09 L384.24 330.09 L384.97 330.10 L385.71 330.10 L386.44 330.10 L387.17 330.11 L387.17 330.2 Z" fill="rgba(30,150,30,0.8)"/><path d="M176.87 330.2 L176.87 330.11 L177.61 330.10 L178.34 330.10 L179.07 330.10 L179.81 330.10 L180.54 330.09 L181.27 330.09 L182.00 330.09 L182.74 330.08 L183.47 330.08 L184.20 330.08 L184.93 330.07 L185.67 330.07 L186.40 330.06 L187.13 330.06 L187.87 330.06 L188.60 330.05 L189.33 330.05 L190.06 330.04 L190.80 330.04 L191.53 330.03 L192.26 330.03 L192.99 330.02 L193.73 330.02 L194.46 330.01 L195.19 330.01 L195.93 330.00 L196.66 330.00 L197.39 329.99 L198.12 329.98 L198.86 329.98 L199.59 329.97 L200.32 329.96 L201.06 329.96 L201.79 329.95 L202.52 329.94 L203.25 329.93 L203.99 329.92 L204.72 329.92 L205.45 329.91 L206.18 329.90 L206.92 329.89 L207.65 329.88 L208.38 329.87 L209.12 329.86 L209.85 329.85 L210.58 329.84 L211.31 329.83 L212.05 329.82 L212.78 329.80 L213.51 329.79 L214.24 329.78 L214.98 329.77 L215.71 329.75 L216.44 329.74 L217.18 329.72 L217.91 329.71 L218.64 329.69 L219.37 329.68 L220.11 329.66 L220.84 329.64 L221.57 329.63 L222.30 329.61 L223.04 329.59 L223.77 329.57 L224.50 329.55 L225.24 329.53 L225.97 329.51 L226.70 329.48 L227.43 329.46 L228.17 329.44 L228.90 329.41 L229.63 329.38 L230.36 329.36 L231.10 329.33 L231.83 329.30 L232.56 329.27 L233.30 329.24 L234.03 329.21 L234.76 329.17 L235.49 329.14 L236.23 329.10 L236.96 329.06 L237.69 329.02 L238.42 328.98 L239.16 328.94 L239.89 328.90 L240.62 328.85 L241.36 328.80 L242.09 328.75 L242.82 328.70 L243.55 328.65 L244.29 328.59 L245.02 328.53 L245.75 328.47 L246.48 328.41 L247.22 328.34 L247.95 328.27 L248.68 328.20 L249.42 328.13 L250.15 328.05 L250.88 327.97 L251.61 327.88 L252.35 327.79 L253.08 327.70 L253.81 327.60 L254.55 327.50 L255.28 327.39 L256.01 327.28 L256.74 327.17 L257.48 327.05 L258.21 326.92 L258.94 326.79 L259.67 326.65 L260.41 326.51 L261.14 326.36 L261.87 326.20 L262.61 326.04 L263.34 325.87 L264.07 325.69 L264.80 325.50 L265.54 325.31 L266.27 325.11 L267.00 324.90 L267.73 324.68 L268.47 324.46 L269.20 324.22 L269.93 323.98 L270.67 323.73 L271.40 323.48 L272.13 323.21 L272.86 322.94 L273.60 322.67 L274.33 322.39 L275.06 322.11 L275.79 321.82 L276.53 321.54 L277.26 321.26 L277.99 320.98 L278.73 320.71 L279.46 320.44 L280.19 320.19 L280.92 319.95 L281.66 319.73 L282.39 319.54 L283.12 319.36 L283.85 319.21 L284.59 319.09 L285.32 319.00 L286.05 318.94 L286.79 318.92 L287.52 318.92 L288.25 318.97 L288.98 319.04 L289.72 319.15 L290.45 319.28 L291.18 319.45 L291.91 319.64 L292.65 319.85 L293.38 320.07 L294.11 320.32 L294.85 320.58 L295.58 320.85 L296.31 321.12 L297.04 321.40 L297.78 321.69 L298.51 321.97 L299.24 322.25 L299.97 322.53 L300.71 322.81 L301.44 323.08 L302.17 323.35 L302.91 323.61 L303.64 323.86 L304.37 324.11 L305.10 324.34 L305.84 324.57 L306.57 324.79 L307.30 325.01 L308.03 325.21 L308.77 325.41 L309.50 325.60 L310.23 325.78 L310.97 325.95 L311.70 326.12 L312.43 326.28 L313.16 326.44 L313.90 326.58 L314.63 326.72 L315.36 326.86 L316.10 326.99 L316.83 327.11 L317.56 327.23 L318.29 327.34 L319.03 327.45 L319.76 327.55 L320.49 327.65 L321.22 327.75 L321.96 327.84 L322.69 327.92 L323.42 328.01 L324.16 328.09 L324.89 328.16 L325.62 328.24 L326.35 328.31 L327.09 328.38 L327.82 328.44 L328.55 328.50 L329.28 328.56 L330.02 328.62 L330.75 328.67 L331.48 328.73 L332.22 328.78 L332.95 328.83 L333.68 328.87 L334.41 328.92 L335.15 328.96 L335.88 329.00 L336.61 329.04 L337.34 329.08 L338.08 329.12 L338.81 329.15 L339.54 329.19 L340.28 329.22 L341.01 329.25 L341.74 329.29 L342.47 329.31 L343.21 329.34 L343.94 329.37 L344.67 329.40 L345.40 329.42 L346.14 329.45 L346.87 329.47 L347.60 329.49 L348.34 329.52 L349.07 329.54 L349.80 329.56 L350.53 329.58 L351.27 329.60 L352.00 329.62 L352.73 329.64 L353.46 329.65 L354.20 329.67 L354.93 329.69 L355.66 329.70 L356.40 329.72 L357.13 329.73 L357.86 329.75 L358.59 329.76 L359.33 329.77 L360.06 329.79 L360.79 329.80 L361.52 329.81 L362.26 329.82 L362.99 329.83 L363.72 329.84 L364.46 329.86 L365.19 329.87 L365.92 329.88 L366.65 329.88 L367.39 329.89 L368.12 329.90 L368.85 329.91 L369.59 329.92 L370.32 329.93 L371.05 329.94 L371.78 329.94 L372.52 329.95 L373.25 329.96 L373.98 329.97 L374.71 329.97 L375.45 329.98 L376.18 329.99 L376.91 329.99 L377.65 330.00 L378.38 330.00 L379.11 330.01 L379.84 330.02 L380.58 330.02 L381.31 330.03 L382.04 330.03 L382.77 330.04 L383.51 330.04 L384.24 330.05 L384.97 330.05 L385.71 330.05 L386.44 330.06 L387.17 330.06 L387.90 330.07 L388.64 330.07 L389.37 330.07 L390.10 330.08 L390.83 330.08 L391.57 330.08 L392.30 330.09 L393.03 330.09 L393.77 330.09 L394.50 330.10 L395.23 330.10 L395.96 330.10 L396.70 330.11 L397.43 330.11 L397.43 330.2 Z" fill="rgba(150,190,20,0.75)"/><path d="M235.49 330.2 L235.49 330.11 L236.23 330.11 L236.96 330.10 L237.69 330.10 L238.42 330.10 L239.16 330.09 L239.89 330.09 L240.62 330.08 L241.36 330.08 L242.09 330.08 L242.82 330.07 L243.55 330.07 L244.29 330.06 L245.02 330.06 L245.75 330.05 L246.48 330.05 L247.22 330.04 L247.95 330.04 L248.68 330.03 L249.42 330.03 L250.15 330.02 L250.88 330.01 L251.61 330.01 L252.35 330.00 L253.08 329.99 L253.81 329.98 L254.55 329.97 L255.28 329.97 L256.01 329.96 L256.74 329.95 L257.48 329.94 L258.21 329.93 L258.94 329.92 L259.67 329.90 L260.41 329.89 L261.14 329.88 L261.87 329.87 L262.61 329.85 L263.34 329.84 L264.07 329.82 L264.80 329.81 L265.54 329.79 L266.27 329.77 L267.00 329.75 L267.73 329.73 L268.47 329.71 L269.20 329.69 L269.93 329.66 L270.67 329.64 L271.40 329.61 L272.13 329.58 L272.86 329.55 L273.60 329.52 L274.33 329.48 L275.06 329.45 L275.79 329.41 L276.53 329.36 L277.26 329.32 L277.99 329.27 L278.73 329.21 L279.46 329.16 L280.19 329.10 L280.92 329.03 L281.66 328.96 L282.39 328.88 L283.12 328.80 L283.85 328.71 L284.59 328.61 L285.32 328.50 L286.05 328.39 L286.79 328.26 L287.52 328.12 L288.25 327.97 L288.98 327.81 L289.72 327.63 L290.45 327.44 L291.18 327.22 L291.91 327.00 L292.65 326.75 L293.38 326.48 L294.11 326.19 L294.85 325.88 L295.58 325.56 L296.31 325.22 L297.04 324.87 L297.78 324.52 L298.51 324.17 L299.24 323.84 L299.97 323.54 L300.71 323.28 L301.44 323.08 L302.17 322.94 L302.91 322.88 L303.64 322.90 L304.37 323.00 L305.10 323.18 L305.84 323.41 L306.57 323.69 L307.30 324.01 L308.03 324.35 L308.77 324.71 L309.50 325.06 L310.23 325.40 L310.97 325.73 L311.70 326.05 L312.43 326.35 L313.16 326.62 L313.90 326.88 L314.63 327.12 L315.36 327.34 L316.10 327.54 L316.83 327.73 L317.56 327.90 L318.29 328.05 L319.03 328.20 L319.76 328.33 L320.49 328.45 L321.22 328.56 L321.96 328.66 L322.69 328.76 L323.42 328.84 L324.16 328.92 L324.89 329.00 L325.62 329.07 L326.35 329.13 L327.09 329.19 L327.82 329.24 L328.55 329.29 L329.28 329.34 L330.02 329.39 L330.75 329.43 L331.48 329.47 L332.22 329.50 L332.95 329.54 L333.68 329.57 L334.41 329.60 L335.15 329.63 L335.88 329.65 L336.61 329.68 L337.34 329.70 L338.08 329.72 L338.81 329.74 L339.54 329.76 L340.28 329.78 L341.01 329.80 L341.74 329.82 L342.47 329.83 L343.21 329.85 L343.94 329.86 L344.67 329.87 L345.40 329.89 L346.14 329.90 L346.87 329.91 L347.60 329.92 L348.34 329.93 L349.07 329.94 L349.80 329.95 L350.53 329.96 L351.27 329.97 L352.00 329.98 L352.73 329.99 L353.46 329.99 L354.20 330.00 L354.93 330.01 L355.66 330.02 L356.40 330.02 L357.13 330.03 L357.86 330.03 L358.59 330.04 L359.33 330.05 L360.06 330.05 L360.79 330.06 L361.52 330.06 L362.26 330.07 L362.99 330.07 L363.72 330.07 L364.46 330.08 L365.19 330.08 L365.92 330.09 L366.65 330.09 L367.39 330.09 L368.12 330.10 L368.85 330.10 L369.59 330.10 L370.32 330.11 L370.32 330.2 Z" fill="rgba(220,110,170,0.7)"/><path d="M63.30 400.00 L64.03 400.00 L64.77 400.00 L65.50 400.00 L66.23 400.00 L66.96 400.00 L67.70 400.00 L68.43 400.00 L69.16 400.00 L69.89 400.00 L70.63 400.00 L71.36 400.00 L72.09 400.00 L72.83 400.00 L73.56 400.00 L74.29 400.00 L75.02 400.00 L75.76 400.00 L76.49 400.00 L77.22 400.00 L77.95 400.00 L78.69 400.00 L79.42 400.00 L80.15 400.00 L80.89 400.00 L81.62 400.00 L82.35 400.00 L83.08 400.00 L83.82 400.00 L84.55 400.00 L85.28 400.00 L86.01 400.00 L86.75 400.00 L87.48 400.00 L88.21 400.00 L88.95 400.00 L89.68 400.00 L90.41 400.00 L91.14 400.00 L91.88 400.00 L92.61 400.00 L93.34 400.00 L94.08 400.00 L94.81 400.00 L95.54 400.00 L96.27 400.00 L97.01 400.00 L97.74 400.00 L98.47 400.00 L99.20 400.00 L99.94 400.00 L100.67 400.00 L101.40 397.95 L102.14 394.97 L102.87 391.99 L103.60 389.02 L104.33 386.06 L105.07 383.10 L105.80 380.16 L106.53 377.24 L107.26 374.33 L108.00 371.44 L108.73 368.59 L109.46 365.77 L110.20 362.99 L110.93 360.27 L111.66 357.61 L112.39 355.03 L113.13 352.53 L113.86 350.13 L114.59 347.86 L115.32 345.71 L116.06 343.71 L116.79 341.87 L117.52 340.19 L118.26 338.68 L118.99 337.33 L119.72 336.16 L120.45 335.14 L121.19 334.27 L121.92 333.53 L122.65 332.91 L123.38 332.39 L124.12 331.96 L124.85 331.61 L125.58 331.33 L126.32 331.09 L127.05 330.90 L127.78 330.75 L128.51 330.63 L129.25 330.53 L129.98 330.45 L130.71 330.38 L131.44 330.33 L132.18 330.28 L132.91 330.25 L133.64 330.22 L134.38 330.20 L135.11 330.18 L135.84 330.17 L136.57 330.15 L137.31 330.14 L138.04 330.13 L138.77 330.12 L139.50 330.12 L140.24 330.11 L140.97 330.10 L141.70 330.10 L142.44 330.09 L143.17 330.09 L143.90 330.09 L144.63 330.08 L145.37 330.08 L146.10 330.07 L146.83 330.07 L147.57 330.06 L148.30 330.06 L149.03 330.06 L149.76 330.05 L150.50 330.05 L151.23 330.04 L151.96 330.04 L152.69 330.03 L153.43 330.03 L154.16 330.02 L154.89 330.02 L155.63 330.01 L156.36 330.01 L157.09 330.00 L157.82 330.00 L158.56 329.99 L159.29 329.98 L160.02 329.98 L160.75 329.97 L161.49 329.96 L162.22 329.96 L162.95 329.95 L163.69 329.94 L164.42 329.94 L165.15 329.93 L165.88 329.92 L166.62 329.91 L167.35 329.90 L168.08 329.89 L168.81 329.88 L169.55 329.88 L170.28 329.87 L171.01 329.86 L171.75 329.85 L172.48 329.84 L173.21 329.83 L173.94 329.81 L174.68 329.80 L175.41 329.79 L176.14 329.78 L176.87 329.77 L177.61 329.75 L178.34 329.74 L179.07 329.73 L179.81 329.71 L180.54 329.70 L181.27 329.68 L182.00 329.67 L182.74 329.65 L183.47 329.64 L184.20 329.62 L184.93 329.60 L185.67 329.58 L186.40 329.57 L187.13 329.55 L187.87 329.53 L188.60 329.51 L189.33 329.49 L190.06 329.46 L190.80 329.44 L191.53 329.42 L192.26 329.40 L192.99 329.37 L193.73 329.35 L194.46 329.32 L195.19 329.29 L195.93 329.27 L196.66 329.24 L197.39 329.21 L198.12 329.18 L198.86 329.15 L199.59 329.12 L200.32 329.08 L201.06 329.05 L201.79 329.01 L202.52 328.98 L203.25 328.94 L203.99 328.90 L204.72 328.86 L205.45 328.82 L206.18 328.77 L206.92 328.73 L207.65 328.68 L208.38 328.64 L209.12 328.59 L209.85 328.54 L210.58 328.48 L211.31 328.43 L212.05 328.37 L212.78 328.32 L213.51 328.26 L214.24 328.19 L214.98 328.13 L215.71 328.06 L216.44 327.99 L217.18 327.92 L217.91 327.85 L218.64 327.77 L219.37 327.69 L220.11 327.61 L220.84 327.53 L221.57 327.44 L222.30 327.35 L223.04 327.25 L223.77 327.16 L224.50 327.06 L225.24 326.95 L225.97 326.84 L226.70 326.73 L227.43 326.62 L228.17 326.49 L228.90 326.37 L229.63 326.24 L230.36 326.11 L231.10 325.97 L231.83 325.82 L232.56 325.67 L233.30 325.52 L234.03 325.36 L234.76 325.19 L235.49 325.02 L236.23 324.84 L236.96 324.66 L237.69 324.47 L238.42 324.27 L239.16 324.06 L239.89 323.85 L240.62 323.63 L241.36 323.41 L242.09 323.17 L242.82 322.93 L243.55 322.68 L244.29 322.43 L245.02 322.16 L245.75 321.89 L246.48 321.61 L247.22 321.33 L247.95 321.04 L248.68 320.74 L249.42 320.43 L250.15 320.12 L250.88 319.80 L251.61 319.48 L252.35 319.15 L253.08 318.83 L253.81 318.50 L254.55 318.17 L255.28 317.84 L256.01 317.51 L256.74 317.18 L257.48 316.86 L258.21 316.55 L258.94 316.25 L259.67 315.95 L260.41 315.67 L261.14 315.40 L261.87 315.15 L262.61 314.91 L263.34 314.69 L264.07 314.49 L264.80 314.31 L265.54 314.15 L266.27 314.01 L267.00 313.89 L267.73 313.79 L268.47 313.72 L269.20 313.66 L269.93 313.62 L270.67 313.60 L271.40 313.59 L272.13 313.60 L272.86 313.63 L273.60 313.66 L274.33 313.72 L275.06 313.78 L275.79 313.86 L276.53 313.95 L277.26 314.05 L277.99 314.16 L278.73 314.29 L279.46 314.44 L280.19 314.60 L280.92 314.78 L281.66 314.98 L282.39 315.21 L283.12 315.46 L283.85 315.74 L284.59 316.05 L285.32 316.39 L286.05 316.76 L286.79 317.17 L287.52 317.60 L288.25 318.07 L288.98 318.56 L289.72 319.08 L290.45 319.63 L291.18 320.19 L291.91 320.78 L292.65 321.38 L293.38 321.99 L294.11 322.61 L294.85 323.23 L295.58 323.87 L296.31 324.51 L297.04 325.16 L297.78 325.83 L298.51 326.52 L299.24 327.23 L299.97 328.00 L300.71 328.81 L301.44 329.70 L302.17 330.66 L302.91 331.71 L303.64 332.85 L304.37 334.08 L305.10 335.40 L305.84 336.78 L306.57 338.22 L307.30 339.71 L308.03 341.23 L308.77 342.77 L309.50 344.32 L310.23 345.87 L310.97 347.42 L311.70 348.96 L312.43 350.50 L313.16 352.02 L313.90 353.53 L314.63 355.03 L315.36 356.52 L316.10 358.01 L316.83 359.49 L317.56 360.96 L318.29 362.42 L319.03 363.88 L319.76 365.34 L320.49 366.80 L321.22 368.25 L321.96 369.70 L322.69 371.15 L323.42 372.60 L324.16 374.06 L324.89 375.51 L325.62 376.96 L326.35 378.42 L327.09 379.88 L327.82 381.34 L328.55 382.80 L329.28 384.26 L330.02 385.72 L330.75 387.19 L331.48 388.66 L332.22 390.13 L332.95 391.60 L333.68 393.08 L334.41 394.56 L335.15 396.04 L335.88 397.52 L336.61 399.00 L337.34 400.00 L338.08 400.00 L338.81 400.00 L339.54 400.00 L340.28 400.00 L341.01 400.00 L341.74 400.00 L342.47 400.00 L343.21 400.00 L343.94 400.00 L344.67 400.00 L345.40 400.00 L346.14 400.00 L346.87 400.00 L347.60 400.00 L348.34 400.00 L349.07 400.00 L349.80 400.00 L350.53 400.00 L351.27 400.00 L352.00 400.00 L352.73 400.00 L353.46 400.00 L354.20 400.00 L354.93 400.00 L355.66 400.00 L356.40 400.00 L357.13 400.00 L357.86 400.00 L358.59 400.00 L359.33 400.00 L360.06 400.00 L360.79 400.00 L361.52 400.00 L362.26 400.00 L362.99 400.00 L363.72 400.00 L364.46 400.00 L365.19 400.00 L365.92 400.00 L366.65 400.00 L367.39 400.00 L368.12 400.00 L368.85 400.00 L369.59 400.00 L370.32 400.00 L371.05 400.00 L371.78 400.00 L372.52 400.00 L373.25 400.00 L373.98 400.00 L374.71 400.00 L375.45 400.00 L376.18 400.00 L376.91 400.00 L377.65 400.00 L378.38 400.00 L379.11 400.00 L379.84 400.00 L380.58 400.00 L381.31 400.00 L382.04 400.00 L382.77 400.00 L383.51 400.00 L384.24 400.00 L384.97 400.00 L385.71 400.00 L386.44 400.00 L387.17 400.00 L387.90 400.00 L388.64 400.00 L389.37 400.00 L390.10 400.00 L390.83 400.00 L391.57 400.00 L392.30 400.00 L393.03 400.00 L393.77 400.00 L394.50 400.00 L395.23 400.00 L395.96 400.00 L396.70 400.00 L397.43 400.00 L398.16 400.00 L398.89 400.00 L399.63 400.00 L400.36 400.00 L401.09 400.00 L401.83 400.00 L402.56 400.00 L403.29 400.00 L404.02 400.00 L404.76 400.00 L405.49 400.00 L406.22 400.00 L406.95 400.00 L407.69 400.00 L408.42 400.00 L409.15 400.00 L409.89 400.00 L410.62 400.00 L411.35 400.00 L412.08 400.00 L412.82 400.00 L413.55 400.00 L414.28 400.00 L415.01 400.00 L415.75 400.00 L416.48 400.00 L417.21 400.00 L417.95 400.00 L418.68 400.00 L419.41 400.00 L420.14 400.00 L420.88 400.00 L421.61 400.00 L422.34 400.00 L423.08 400.00 L423.81 400.00 L424.54 400.00 L425.27 400.00 L426.01 400.00 L426.74 400.00 L427.47 400.00 L428.20 400.00 L428.94 400.00" fill="none" stroke="#ff1a1a" stroke-width="2"/><circle cx="121.82" cy="330.20" r="4.1" fill="#b0703c" fill-opacity="0.2" stroke="#b0703c" stroke-width="1.4" stroke-opacity="0.85"/><text x="121.82" y="332.50" text-anchor="middle" font-family="Liberation Sans" font-size="6" font-weight="bold" fill="#b0703c">1</text><circle cx="158.09" cy="330.20" r="4.1" fill="#6a2ab0" fill-opacity="0.2" stroke="#6a2ab0" stroke-width="1.4" stroke-opacity="0.85"/><text x="158.09" y="332.50" text-anchor="middle" font-family="Liberation Sans" font-size="6" font-weight="bold" fill="#6a2ab0">2</text><circle cx="193.94" cy="330.20" r="4.1" fill="#2aa6b8" fill-opacity="0.2" stroke="#2aa6b8" stroke-width="1.4" stroke-opacity="0.85"/><text x="193.94" y="332.50" text-anchor="middle" font-family="Liberation Sans" font-size="6" font-weight="bold" fill="#2aa6b8">3</text><circle cx="265.96" cy="318.00" r="4.1" fill="#26a626" fill-opacity="0.2" stroke="#26a626" stroke-width="1.4" stroke-opacity="0.85"/><text x="265.96" y="320.30" text-anchor="middle" font-family="Liberation Sans" font-size="6" font-weight="bold" fill="#26a626">4</text><circle cx="286.96" cy="318.91" r="4.1" fill="#8c9a28" fill-opacity="0.2" stroke="#8c9a28" stroke-width="1.4" stroke-opacity="0.85"/><text x="286.96" y="321.21" text-anchor="middle" font-family="Liberation Sans" font-size="6" font-weight="bold" fill="#8c9a28">5</text><circle cx="303.08" cy="322.88" r="4.1" fill="#8a2aa8" fill-opacity="0.2" stroke="#8a2aa8" stroke-width="1.4" stroke-opacity="0.85"/><text x="303.08" y="325.18" text-anchor="middle" font-family="Liberation Sans" font-size="6" font-weight="bold" fill="#8a2aa8">6</text><circle cx="337.35" cy="330.20" r="5" fill="#d8d820" fill-opacity="0.95"/><text x="337.35" y="332.50" text-anchor="middle" font-family="Liberation Sans" font-size="6.5" font-weight="bold" fill="#555">7</text><circle cx="373.21" cy="330.20" r="5" fill="#48b038" fill-opacity="0.95"/><text x="373.21" y="332.50" text-anchor="middle" font-family="Liberation Sans" font-size="6.5" font-weight="bold" fill="#555">8</text><rect x="109.31" y="326.0" width="8.8" height="8.6" rx="1.2" fill="#d8d4b4"/><text x="113.71" y="332.59999999999997" text-anchor="middle" font-family="Liberation Sans" font-size="7" font-weight="bold" fill="#333">H</text><rect x="287.11" y="326.0" width="9.2" height="8.6" rx="1.2" fill="#cfcbb8"/><text x="291.71" y="332.59999999999997" text-anchor="middle" font-family="Liberation Sans" font-size="7" font-weight="bold" fill="#333">L</text></svg>
</div>
<div style="position:absolute;left:0;top:0;width:1px;height:286px;background:#8ea6cf;"></div>
</div>
<div style="position:absolute;left:0;top:0;width:457px;height:337.2px;overflow:hidden;background:#d8e4fc;transform-origin:0 0;transform:translate(74px,12.5px);font-family:"Liberation Sans", sans-serif;">
<div style="position:absolute;left:0px;top:0px;width:1px;height:337.2px;background:#8ea6cf;"></div>
<div style="position:absolute;left:456px;top:0px;width:1px;height:337.2px;background:#8ea6cf;"></div>
<div style="position:absolute;left:0px;top:0px;width:457px;height:18.5px;background:linear-gradient(#e2eaf8 0%,#c4d5f1 44%,#8eaede 46%,#7599d6 85%,#5f88cc 100%);"></div>
<svg style="position:absolute;left:0;top:0" width="457" height="19" viewBox="0 0 457 19">
<defs><linearGradient id="tg1" x1="0" y1="0" x2="0" y2="1">
<stop offset="0" stop-color="#c9d3e6"/><stop offset="0.35" stop-color="#aab8d6"/><stop offset="0.55" stop-color="#7f95c0"/><stop offset="0.75" stop-color="#a8b8d8"/><stop offset="1" stop-color="#c6d2ea"/></linearGradient></defs>
<path d="M390 0 L457 0 L457 18.5 L373 18.5 Z" fill="url(#tg1)"/>
<path d="M390 0.3 L374 17" stroke="#eef3fb" stroke-width="1"/>
<rect x="0" y="17.6" width="457" height="1" fill="#6f90c8"/>
<circle cx="430.5" cy="8" r="6.1" fill="#5a78b0"/>
<circle cx="430.5" cy="8" r="5.2" fill="#e6f6ff"/>
<circle cx="430.5" cy="8" r="3.7" fill="#a6c4ec"/>
<rect x="428.7" y="6.3" width="3.6" height="3.3" fill="none" stroke="#263a6a" stroke-width="1.3"/>
<circle cx="444.4" cy="8" r="6.1" fill="#5a78b0"/>
<circle cx="444.4" cy="8" r="5.2" fill="#e6f6ff"/>
<circle cx="444.4" cy="8" r="3.7" fill="#a6c4ec"/>
<path d="M442.6 6.2 L446.2 9.8 M446.2 6.2 L442.6 9.8" stroke="#263a6a" stroke-width="1.5"/>
</svg>
<div style="position:absolute;left:4.5px;top:2.6px;width:7px;height:6px;background:#3a4252;border-radius:1px;"></div>
<div style="position:absolute;left:5.5px;top:3.6px;width:5px;height:2px;background:#707c90;"></div>
<div style="position:absolute;left:6px;top:8.6px;width:4px;height:1px;background:#505a6a;"></div>
<div style="position:absolute;left:13.4px;top:2.1px;text-align:left;white-space:nowrap;font-size:8.2px;font-weight:bold;color:#141a28;letter-spacing:-0.2px;word-spacing:2.5px;transform:scaleX(0.78);transform-origin:0 0;text-shadow:0.35px 0 0 #141a28;">ID:9 DSPModule</div>
<svg style="position:absolute;left:14.0px;top:20.5px" width="18" height="18" viewBox="0 0 18 18">
<path d="M1 16.3 L1 0.8 L6.3 0.8 L7.3 2.3 L14.6 2.3 L14.6 4.6" fill="#eceef4" stroke="#8e8e92" stroke-width="1.2"/>
<path d="M2.8 4.6 L15.8 4.6 L14.5 16.3 L1 16.3 Z" fill="#e6e8f0" stroke="#8a8a8e" stroke-width="1.2"/>
</svg>
<div style="position:absolute;left:-7.5px;top:37.0px;width:60px;text-align:center;white-space:nowrap;font-size:8.3px;color:#3a4252;letter-spacing:-0.1px;transform:scaleX(0.87);">Load</div>
<svg style="position:absolute;left:56.0px;top:20.5px" width="18" height="18" viewBox="0 0 18 18">
<path d="M0 0 L13.9 0 L17 2.9 L17 16.8 L0 16.8 Z" fill="#000"/>
<rect x="3.1" y="1.2" width="2.9" height="3.9" rx="1.2" fill="#fff"/>
<path d="M2.1 16.8 L2.1 8.2 Q2.1 6.7 3.6 6.7 L13.6 6.7 Q15.1 6.7 15.1 8.2 L15.1 16.8" fill="#000" stroke="#cfcfcf" stroke-width="1.3"/>
</svg>
<div style="position:absolute;left:34.5px;top:37.0px;width:60px;text-align:center;white-space:nowrap;font-size:8.3px;color:#3a4252;letter-spacing:-0.1px;transform:scaleX(0.87);">Save</div>
<svg style="position:absolute;left:98px;top:20.5px" width="19" height="18" viewBox="0 0 19 18">
<path d="M14.4 12.8 A7.3 7.3 0 1 1 14.2 4.3" fill="none" stroke="#000" stroke-width="1.9"/>
<path d="M11.2 5.9 L18.6 3.7 L15.9 10.3 Z" fill="#000"/>
</svg>
<div style="position:absolute;left:77px;top:37.0px;width:60px;text-align:center;white-space:nowrap;font-size:8.3px;color:#3a4252;letter-spacing:-0.1px;transform:scaleX(0.87);">Recall</div>
<svg style="position:absolute;left:140px;top:20.5px" width="18" height="18" viewBox="0 0 18 18">
<rect x="3.6" y="0.2" width="2.2" height="16.8" fill="#000"/><rect x="7.6" y="0.2" width="2.2" height="16.8" fill="#000"/><rect x="11.5" y="0.2" width="2.2" height="16.8" fill="#000"/><rect x="0.3" y="3.3500000000000005" width="16.8" height="2.1" fill="#000"/><rect x="0.3" y="7.3500000000000005" width="16.8" height="2.1" fill="#000"/><rect x="0.3" y="11.25" width="16.8" height="2.1" fill="#000"/><rect x="2.2" y="2.3" width="13" height="12.9" fill="#000"/><rect x="5.9" y="6" width="5" height="4.8" fill="#d8e4fc"/>
</svg>
<div style="position:absolute;left:119px;top:37.0px;width:60px;text-align:center;white-space:nowrap;font-size:8.3px;color:#3a4252;letter-spacing:-0.1px;transform:scaleX(0.87);">Store</div>
<svg style="position:absolute;left:182.5px;top:20.5px" width="18" height="18" viewBox="0 0 18 18">
<rect x="1" y="1" width="6.6" height="6.6" rx="0.5" fill="none" stroke="#a4a6ae" stroke-width="1"/>
<rect x="9" y="8.7" width="6.6" height="6.8" fill="#b4b2b2" stroke="#4a4a4e" stroke-width="1.1"/>
<path d="M10.2 1.8 Q15.2 1.6 15.4 6.8" fill="none" stroke="#555a62" stroke-width="1"/>
<circle cx="10.2" cy="1.9" r="0.9" fill="#222"/>
<path d="M1.2 9.6 Q1.2 14.3 6.2 14.3" fill="none" stroke="#3a3e46" stroke-width="1"/>
<circle cx="6.4" cy="14.3" r="0.9" fill="#222"/>
</svg>
<div style="position:absolute;left:161px;top:37.0px;width:60px;text-align:center;white-space:nowrap;font-size:8.3px;color:#3a4252;letter-spacing:-0.1px;transform:scaleX(0.87);">Copy</div>
<svg style="position:absolute;left:224.0px;top:20.5px" width="17" height="17" viewBox="0 0 17 17">
<rect x="7" y="0.2" width="3" height="4" fill="#000" transform="rotate(0 8.5 8.5)"/><rect x="7" y="0.2" width="3" height="4" fill="#000" transform="rotate(45 8.5 8.5)"/><rect x="7" y="0.2" width="3" height="4" fill="#000" transform="rotate(90 8.5 8.5)"/><rect x="7" y="0.2" width="3" height="4" fill="#000" transform="rotate(135 8.5 8.5)"/><rect x="7" y="0.2" width="3" height="4" fill="#000" transform="rotate(180 8.5 8.5)"/><rect x="7" y="0.2" width="3" height="4" fill="#000" transform="rotate(225 8.5 8.5)"/><rect x="7" y="0.2" width="3" height="4" fill="#000" transform="rotate(270 8.5 8.5)"/><rect x="7" y="0.2" width="3" height="4" fill="#000" transform="rotate(315 8.5 8.5)"/><circle cx="8.5" cy="8.5" r="6.1" fill="#000"/><circle cx="8.5" cy="8.5" r="3.7" fill="#e4ecfa"/><circle cx="8.5" cy="8.5" r="1.9" fill="#000"/>
</svg>
<div style="position:absolute;left:202.5px;top:37.0px;width:60px;text-align:center;white-space:nowrap;font-size:8.3px;color:#3a4252;letter-spacing:-0.1px;transform:scaleX(0.87);">Setup</div>
<svg style="position:absolute;left:266px;top:20.5px" width="18" height="17" viewBox="0 0 18 17">
<path d="M3.7 7 L3.7 5.8 A4.9 4.9 0 0 1 13.1 3.7" fill="none" stroke="#111" stroke-width="1.5"/>
<rect x="1" y="6.9" width="15.3" height="9" rx="1.6" fill="none" stroke="#111" stroke-width="1.5"/>
<ellipse cx="8.6" cy="11.3" rx="2.6" ry="1.9" fill="none" stroke="#111" stroke-width="1.3"/>
<circle cx="8.6" cy="11.3" r="0.7" fill="#111"/>
</svg>
<div style="position:absolute;left:245px;top:37.0px;width:60px;text-align:center;white-space:nowrap;font-size:8.3px;color:#3a4252;letter-spacing:-0.1px;transform:scaleX(0.87);">Lock Preset</div>
<svg style="position:absolute;left:309px;top:20.5px" width="16" height="17" viewBox="0 0 16 17">
<path d="M3 3.2 Q1.3 3.4 1.3 5 L1.3 14 Q1.3 15.3 2.6 15.3 L11.2 15.3 L11.8 14" fill="none" stroke="#111" stroke-width="1.3"/>
<path d="M5 1 L11.6 1 L14.4 3.8 L14.4 12.4 Q14.4 13.7 13.1 13.7 L5 13.7 Q3.7 13.7 3.7 12.4 L3.7 2.3 Q3.7 1 5 1 Z" fill="#f2f4fa" stroke="#111" stroke-width="1.3"/>
<path d="M11.4 1.2 L11.6 3.6 L14.2 3.8" fill="#111" stroke="#111" stroke-width="0.9"/>
<path d="M6.2 7.8 L11.8 7.8 M6.2 10.3 L11.8 10.3" stroke="#111" stroke-width="1.2"/>
</svg>
<div style="position:absolute;left:287px;top:37.0px;width:60px;text-align:center;white-space:nowrap;font-size:8.3px;color:#3a4252;letter-spacing:-0.1px;transform:scaleX(0.87);">All Presets</div>
<div style="position:absolute;left:2px;top:66px;width:452.5px;height:271.2px;background:#d6e2fb;border-top:1px solid #b4c8e6;"></div>
<div style="position:absolute;left:3px;top:70.5px;width:450px;height:267.2px;border-top:1px solid #a9bfdf;background:#d9e5fc;"></div>
<div style="position:absolute;left:7.5px;top:51.2px;width:31.5px;height:14.8px;background:linear-gradient(#c9d8f2 0%,#a9c2ea 60%,#9bb6e4 100%);border:1px solid #8d9fd4;border-top:2px solid #8a92d8;border-radius:3px 3px 0 0;box-sizing:border-box;"></div>
<div style="position:absolute;left:7.5px;top:52.9px;width:31.5px;text-align:center;white-space:nowrap;font-size:7.9px;font-weight:bold;color:#141a2a;">Gains</div>
<div style="position:absolute;left:40.5px;top:51.2px;width:66.0px;height:14.8px;background:linear-gradient(#c9d8f2 0%,#a9c2ea 60%,#9bb6e4 100%);border:1px solid #8d9fd4;border-top:2px solid #8a92d8;border-radius:3px 3px 0 0;box-sizing:border-box;"></div>
<div style="position:absolute;left:40.5px;top:52.9px;width:66.0px;text-align:center;white-space:nowrap;font-size:7.9px;font-weight:bold;color:#141a2a;">Source &bull; Delay</div>
<div style="position:absolute;left:108px;top:51px;width:23px;height:16px;background:linear-gradient(#f4f7fc,#dce6f6);border:1px solid #9fb4d8;border-bottom:none;border-radius:3px 3px 0 0;"></div>
<div style="position:absolute;left:108px;top:52.9px;width:23px;text-align:center;white-space:nowrap;font-size:7.9px;font-weight:bold;color:#141a2a;">In A</div>
<div style="position:absolute;left:133px;top:51.2px;width:23px;height:14.8px;background:linear-gradient(#c9d8f2 0%,#a9c2ea 60%,#9bb6e4 100%);border:1px solid #8d9fd4;border-top:2px solid #8a92d8;border-radius:3px 3px 0 0;box-sizing:border-box;"></div>
<div style="position:absolute;left:133px;top:52.9px;width:23px;text-align:center;white-space:nowrap;font-size:7.9px;font-weight:bold;color:#141a2a;">In B</div>
<div style="position:absolute;left:157px;top:51.2px;width:29px;height:14.8px;background:linear-gradient(#c9d8f2 0%,#a9c2ea 60%,#9bb6e4 100%);border:1px solid #8d9fd4;border-top:2px solid #8a92d8;border-radius:3px 3px 0 0;box-sizing:border-box;"></div>
<div style="position:absolute;left:157px;top:52.9px;width:29px;text-align:center;white-space:nowrap;font-size:7.9px;font-weight:bold;color:#141a2a;">Out 1</div>
<div style="position:absolute;left:187px;top:51.2px;width:28px;height:14.8px;background:linear-gradient(#c9d8f2 0%,#a9c2ea 60%,#9bb6e4 100%);border:1px solid #8d9fd4;border-top:2px solid #8a92d8;border-radius:3px 3px 0 0;box-sizing:border-box;"></div>
<div style="position:absolute;left:187px;top:52.9px;width:28px;text-align:center;white-space:nowrap;font-size:7.9px;font-weight:bold;color:#141a2a;">Out 2</div>
<div style="position:absolute;left:217px;top:51.2px;width:38px;height:14.8px;background:linear-gradient(#c9d8f2 0%,#a9c2ea 60%,#9bb6e4 100%);border:1px solid #8d9fd4;border-top:2px solid #8a92d8;border-radius:3px 3px 0 0;box-sizing:border-box;"></div>
<div style="position:absolute;left:217px;top:52.9px;width:38px;text-align:center;white-space:nowrap;font-size:7.9px;font-weight:bold;color:#141a2a;">Limiters</div>
<div style="position:absolute;left:0px;top:70.5px;width:5px;height:267.2px;background:linear-gradient(90deg,#9fb2dc 0px,#b2cceb 1.2px,#aac4de 2.6px,#b6cceb 3.6px,#a3bfe2 5px);"></div>
<div style="position:absolute;left:450.5px;top:70.5px;width:6.5px;height:267.2px;background:linear-gradient(90deg,#a9bfe4 0px,#b9cdec 1.5px,#a8bee2 3px,#bccfee 4px,#a6bce2 5.2px,#8ea6cf 6.5px);"></div>
<div style="position:absolute;left:5px;top:76.5px;width:46px;height:261.2px;background:#f0f1f1;border-left:1px solid #dfe8f0;border-top:1px solid #c8d6ec;border-right:1px solid #8fb0e0;box-sizing:border-box;"></div>
<div style="position:absolute;left:5.6px;top:77.2px;width:44.6px;height:12.3px;background:#f6f7f7;"></div>
<div style="position:absolute;left:5.6px;top:89.5px;width:45px;height:1px;background:#d6dee8;"></div>
<div style="position:absolute;left:5px;top:80.2px;width:46px;text-align:center;white-space:nowrap;font-size:6.4px;color:#404040;">Gain</div>
<div style="position:absolute;left:10px;top:97.8px;width:26px;height:19.3px;background:#fff;border:1px solid #a9b9d0;box-sizing:border-box;"></div>
<div style="position:absolute;left:11.6px;top:98.6px;text-align:left;white-space:nowrap;font-size:8.4px;color:#333;transform:scaleX(0.8);transform-origin:0 0;">0</div>
<svg style="position:absolute;left:26.5px;top:98px" width="9.5" height="19" viewBox="0 0 9.5 19">
<rect x="0" y="0" width="9.5" height="19" fill="#c8d8ee" stroke="#9fb4d4" stroke-width="0.6"/>
<ellipse cx="4.8" cy="5.3" rx="3.8" ry="3.6" fill="#6d8ed0"/><path d="M2.8 6.5 L4.8 4 L6.8 6.5 Z" fill="#111"/>
<ellipse cx="4.8" cy="13.6" rx="3.8" ry="3.6" fill="#6d8ed0"/><path d="M2.8 12.4 L4.8 15 L6.8 12.4 Z" fill="#111"/>
</svg>
<div style="position:absolute;left:36.6px;top:99.5px;text-align:left;white-space:nowrap;font-size:10.2px;color:#404040;">dB</div>
<div style="position:absolute;left:26.1px;top:129.8px;width:1.3px;height:136.7px;background:#50505e;"></div>
<svg style="position:absolute;left:22.2px;top:155.3px" width="9" height="14.5" viewBox="0 0 9 14.5">
<rect x="0.3" y="0.6" width="8.4" height="13.6" fill="#3c3c72"/><rect x="1.2" y="2.2" width="6.6" height="2.6" fill="#4a4a88"/><rect x="0.3" y="6.4" width="8.4" height="1.5" fill="#eceef4"/><rect x="0.3" y="7.9" width="8.4" height="4.6" fill="#50509a"/><rect x="0.3" y="12.5" width="8.4" height="1.7" fill="#0c0c18"/>
</svg>
<div style="position:absolute;left:23.5px;top:290px;width:6.5px;height:6.5px;border-radius:50%;background:radial-gradient(circle at 50% 45%,#7cff5c 0%,#2cc42c 45%,#2a6a2a 100%);"></div>
<div style="position:absolute;left:12px;top:308.3px;width:30.5px;height:16.7px;background:linear-gradient(#e8f0fc 0%,#b9cdee 50%,#98b2e2 100%);border:1px solid #7f98c8;border-radius:3px;box-sizing:border-box;"></div>
<div style="position:absolute;left:12px;top:312.5px;width:30.5px;text-align:center;white-space:nowrap;font-size:6.3px;color:#1a2240;">Mute</div>
<div style="position:absolute;left:12px;top:329.5px;width:30.5px;height:16.7px;background:linear-gradient(#eef4fc 0%,#c9d9f2 50%,#a8bfe8 100%);border:1px solid #7f98c8;border-radius:3px;box-sizing:border-box;"></div>
<div style="position:absolute;left:12px;top:330.5px;width:30.5px;text-align:center;white-space:nowrap;font-size:9px;font-weight:bold;color:#1a2240;">0</div>
<div style="position:absolute;left:52px;top:80px;width:399.7px;height:257.2px;border-top:1px solid #a8bedf;border-left:1px solid #b2c6e4;border-right:1px solid #b2c6e4;box-sizing:border-box;background:#d8e4fc;"></div>
<div style="position:absolute;left:53px;top:88px;width:397px;height:10.4px;border:1px solid #a9bedd;border-bottom:none;box-sizing:border-box;background:#dce7fc;"></div>
<div style="position:absolute;left:53px;top:88px;width:397px;height:170.5px;border:1px solid #a9bedd;box-sizing:border-box;"></div>
<div style="position:absolute;left:57px;top:96.5px;width:181.5px;height:92.5px;border:1px solid #9fb6d8;box-sizing:border-box;background:#d7e3fc;"></div>
<div style="position:absolute;left:59px;top:102px;width:178px;height:13.5px;background:#000;"></div>
<div style="position:absolute;left:59px;top:103.0px;width:178px;text-align:center;white-space:nowrap;font-size:10.3px;font-weight:bold;color:#ff1414;letter-spacing:0.75px;">Input A</div>
<div style="position:absolute;left:246.8px;top:98px;width:203.2px;height:160.5px;border-left:1px solid #8f9fb8;border-top:1px solid #a9bedd;box-sizing:border-box;background:#dae5fd;"></div>
<div style="position:absolute;left:250px;top:103.8px;width:50px;text-align:center;white-space:nowrap;font-size:6.6px;color:#303038;">Type</div>
<div style="position:absolute;left:297px;top:103.8px;width:50px;text-align:center;white-space:nowrap;font-size:6.6px;color:#303038;letter-spacing:-0.35px;">Frequency</div>
<div style="position:absolute;left:336px;top:103.8px;width:50px;text-align:center;white-space:nowrap;font-size:6.6px;color:#303038;">Q</div>
<div style="position:absolute;left:371px;top:103.8px;width:50px;text-align:center;white-space:nowrap;font-size:6.6px;color:#303038;">Gain</div>
<div style="position:absolute;left:250.5px;top:113.69999999999999px;text-align:left;white-space:nowrap;font-size:7.2px;color:#303038;">1.</div>
<div style="position:absolute;left:259.3px;top:112.6px;width:37.7px;height:11.8px;background:#fff;border:1px solid #9fb4d6;box-sizing:border-box;"></div>
<div style="position:absolute;left:286.5px;top:113.6px;width:1px;height:9.8px;background:#c4d0e4;"></div>
<div style="position:absolute;left:262.3px;top:114.19999999999999px;text-align:left;white-space:nowrap;font-size:7.1px;color:#202028;transform:scaleX(0.8);transform-origin:0 0;">PEQ</div>
<svg style="position:absolute;left:289.6px;top:117.40px" width="4.5" height="3" viewBox="0 0 4.5 3"><path d="M0 0 L4.5 0 L2.25 3 Z" fill="#000"/></svg>
<div style="position:absolute;left:303.4px;top:112.6px;width:37.6px;height:11.5px;background:#fff;border:1px solid #9fb4d6;box-sizing:border-box;"></div>
<div style="position:absolute;left:304.8px;top:114.0px;text-align:left;white-space:nowrap;font-size:6.8px;color:#303038;">62</div>
<svg style="position:absolute;left:330.8px;top:112.60px" width="10.5" height="11.5" viewBox="0 0 10.5 11.5">
<rect x="0" y="0.5" width="10.5" height="10.5" fill="#f2f2ee"/><rect x="0" y="5.2" width="10" height="1" fill="#909090"/>
<rect x="9.2" y="0" width="1.3" height="11.5" fill="#707078"/><rect x="0" y="10.6" width="10.5" height="0.9" fill="#8a8a90"/>
<circle cx="4.4" cy="3" r="0.8" fill="#222"/><circle cx="4.4" cy="8.4" r="0.8" fill="#222"/></svg>
<div style="position:absolute;left:346px;top:112.6px;width:30.4px;height:11.8px;background:#fff;border:1px solid #9fb4d6;box-sizing:border-box;"></div>
<div style="position:absolute;left:366px;top:113.6px;width:1px;height:9.8px;background:#c4d0e4;"></div>
<div style="position:absolute;left:348.5px;top:114.19999999999999px;text-align:left;white-space:nowrap;font-size:6.8px;color:#303038;letter-spacing:-0.2px;">7.208</div>
<svg style="position:absolute;left:368.9px;top:117.40px" width="4.5" height="3" viewBox="0 0 4.5 3"><path d="M0 0 L4.5 0 L2.25 3 Z" fill="#000"/></svg>
<div style="position:absolute;left:380.3px;top:112.6px;width:31.3px;height:11.8px;background:#fff;border:1px solid #9fb4d6;box-sizing:border-box;"></div>
<div style="position:absolute;left:381.6px;top:113.8px;text-align:left;white-space:nowrap;font-size:6.8px;color:#303038;">0.7</div>
<svg style="position:absolute;left:401.8px;top:112.60px" width="9.8" height="11.8" viewBox="0 0 9.8 11.8">
<rect x="0" y="0" width="9.8" height="11.8" fill="#c9d7ee"/>
<ellipse cx="4.9" cy="3.2" rx="3.6" ry="2.6" fill="#6f8ccb"/><path d="M3 4.2 L4.9 1.8 L6.8 4.2 Z" fill="#101018"/>
<ellipse cx="4.9" cy="8.6" rx="3.6" ry="2.6" fill="#6f8ccb"/><path d="M3 7.6 L4.9 10 L6.8 7.6 Z" fill="#101018"/>
</svg>
<div style="position:absolute;left:416px;top:114.89999999999999px;width:7.8px;height:7.8px;background:#f6f6f4;border:1px solid #9a9aa0;box-sizing:border-box;"></div>
<div style="position:absolute;left:425.6px;top:115.39999999999999px;text-align:left;white-space:nowrap;font-size:6.9px;color:#505058;letter-spacing:-0.5px;">Bypass</div>
<div style="position:absolute;left:250.5px;top:126.73999999999998px;text-align:left;white-space:nowrap;font-size:7.2px;color:#303038;">2.</div>
<div style="position:absolute;left:259.3px;top:125.63999999999999px;width:37.7px;height:11.8px;background:#fff;border:1px solid #9fb4d6;box-sizing:border-box;"></div>
<div style="position:absolute;left:286.5px;top:126.63999999999999px;width:1px;height:9.8px;background:#c4d0e4;"></div>
<div style="position:absolute;left:262.3px;top:127.23999999999998px;text-align:left;white-space:nowrap;font-size:7.1px;color:#202028;transform:scaleX(0.8);transform-origin:0 0;">PEQ</div>
<svg style="position:absolute;left:289.6px;top:130.44px" width="4.5" height="3" viewBox="0 0 4.5 3"><path d="M0 0 L4.5 0 L2.25 3 Z" fill="#000"/></svg>
<div style="position:absolute;left:303.4px;top:125.63999999999999px;width:37.6px;height:11.5px;background:#fff;border:1px solid #9fb4d6;box-sizing:border-box;"></div>
<div style="position:absolute;left:304.8px;top:127.03999999999999px;text-align:left;white-space:nowrap;font-size:6.8px;color:#303038;">132</div>
<svg style="position:absolute;left:330.8px;top:125.64px" width="10.5" height="11.5" viewBox="0 0 10.5 11.5">
<rect x="0" y="0.5" width="10.5" height="10.5" fill="#f2f2ee"/><rect x="0" y="5.2" width="10" height="1" fill="#909090"/>
<rect x="9.2" y="0" width="1.3" height="11.5" fill="#707078"/><rect x="0" y="10.6" width="10.5" height="0.9" fill="#8a8a90"/>
<circle cx="4.4" cy="3" r="0.8" fill="#222"/><circle cx="4.4" cy="8.4" r="0.8" fill="#222"/></svg>
<div style="position:absolute;left:346px;top:125.63999999999999px;width:30.4px;height:11.8px;background:#fff;border:1px solid #9fb4d6;box-sizing:border-box;"></div>
<div style="position:absolute;left:366px;top:126.63999999999999px;width:1px;height:9.8px;background:#c4d0e4;"></div>
<div style="position:absolute;left:348.5px;top:127.23999999999998px;text-align:left;white-space:nowrap;font-size:6.8px;color:#303038;letter-spacing:-0.2px;">7.208</div>
<svg style="position:absolute;left:368.9px;top:130.44px" width="4.5" height="3" viewBox="0 0 4.5 3"><path d="M0 0 L4.5 0 L2.25 3 Z" fill="#000"/></svg>
<div style="position:absolute;left:380.3px;top:125.63999999999999px;width:31.3px;height:11.8px;background:#fff;border:1px solid #9fb4d6;box-sizing:border-box;"></div>
<div style="position:absolute;left:381.6px;top:126.83999999999999px;text-align:left;white-space:nowrap;font-size:6.8px;color:#303038;">1.0</div>
<svg style="position:absolute;left:401.8px;top:125.64px" width="9.8" height="11.8" viewBox="0 0 9.8 11.8">
<rect x="0" y="0" width="9.8" height="11.8" fill="#c9d7ee"/>
<ellipse cx="4.9" cy="3.2" rx="3.6" ry="2.6" fill="#6f8ccb"/><path d="M3 4.2 L4.9 1.8 L6.8 4.2 Z" fill="#101018"/>
<ellipse cx="4.9" cy="8.6" rx="3.6" ry="2.6" fill="#6f8ccb"/><path d="M3 7.6 L4.9 10 L6.8 7.6 Z" fill="#101018"/>
</svg>
<div style="position:absolute;left:416px;top:127.93999999999998px;width:7.8px;height:7.8px;background:#f6f6f4;border:1px solid #9a9aa0;box-sizing:border-box;"></div>
<div style="position:absolute;left:425.6px;top:128.44px;text-align:left;white-space:nowrap;font-size:6.9px;color:#505058;letter-spacing:-0.5px;">Bypass</div>
<div style="position:absolute;left:250.5px;top:139.78px;text-align:left;white-space:nowrap;font-size:7.2px;color:#303038;">3.</div>
<div style="position:absolute;left:259.3px;top:138.68px;width:37.7px;height:11.8px;background:#fff;border:1px solid #9fb4d6;box-sizing:border-box;"></div>
<div style="position:absolute;left:286.5px;top:139.68px;width:1px;height:9.8px;background:#c4d0e4;"></div>
<div style="position:absolute;left:262.3px;top:140.28px;text-align:left;white-space:nowrap;font-size:7.1px;color:#202028;transform:scaleX(0.8);transform-origin:0 0;">PEQ</div>
<svg style="position:absolute;left:289.6px;top:143.48px" width="4.5" height="3" viewBox="0 0 4.5 3"><path d="M0 0 L4.5 0 L2.25 3 Z" fill="#000"/></svg>
<div style="position:absolute;left:303.4px;top:138.68px;width:37.6px;height:11.5px;background:#fff;border:1px solid #9fb4d6;box-sizing:border-box;"></div>
<div style="position:absolute;left:304.8px;top:140.08px;text-align:left;white-space:nowrap;font-size:6.8px;color:#303038;">266</div>
<svg style="position:absolute;left:330.8px;top:138.68px" width="10.5" height="11.5" viewBox="0 0 10.5 11.5">
<rect x="0" y="0.5" width="10.5" height="10.5" fill="#f2f2ee"/><rect x="0" y="5.2" width="10" height="1" fill="#909090"/>
<rect x="9.2" y="0" width="1.3" height="11.5" fill="#707078"/><rect x="0" y="10.6" width="10.5" height="0.9" fill="#8a8a90"/>
<circle cx="4.4" cy="3" r="0.8" fill="#222"/><circle cx="4.4" cy="8.4" r="0.8" fill="#222"/></svg>
<div style="position:absolute;left:346px;top:138.68px;width:30.4px;height:11.8px;background:#fff;border:1px solid #9fb4d6;box-sizing:border-box;"></div>
<div style="position:absolute;left:366px;top:139.68px;width:1px;height:9.8px;background:#c4d0e4;"></div>
<div style="position:absolute;left:348.5px;top:140.28px;text-align:left;white-space:nowrap;font-size:6.8px;color:#303038;letter-spacing:-0.2px;">7.208</div>
<svg style="position:absolute;left:368.9px;top:143.48px" width="4.5" height="3" viewBox="0 0 4.5 3"><path d="M0 0 L4.5 0 L2.25 3 Z" fill="#000"/></svg>
<div style="position:absolute;left:380.3px;top:138.68px;width:31.3px;height:11.8px;background:#fff;border:1px solid #9fb4d6;box-sizing:border-box;"></div>
<div style="position:absolute;left:381.6px;top:139.88px;text-align:left;white-space:nowrap;font-size:6.8px;color:#303038;">1.7</div>
<svg style="position:absolute;left:401.8px;top:138.68px" width="9.8" height="11.8" viewBox="0 0 9.8 11.8">
<rect x="0" y="0" width="9.8" height="11.8" fill="#c9d7ee"/>
<ellipse cx="4.9" cy="3.2" rx="3.6" ry="2.6" fill="#6f8ccb"/><path d="M3 4.2 L4.9 1.8 L6.8 4.2 Z" fill="#101018"/>
<ellipse cx="4.9" cy="8.6" rx="3.6" ry="2.6" fill="#6f8ccb"/><path d="M3 7.6 L4.9 10 L6.8 7.6 Z" fill="#101018"/>
</svg>
<div style="position:absolute;left:416px;top:140.98000000000002px;width:7.8px;height:7.8px;background:#f6f6f4;border:1px solid #9a9aa0;box-sizing:border-box;"></div>
<div style="position:absolute;left:425.6px;top:141.48000000000002px;text-align:left;white-space:nowrap;font-size:6.9px;color:#505058;letter-spacing:-0.5px;">Bypass</div>
<div style="position:absolute;left:250.5px;top:152.82px;text-align:left;white-space:nowrap;font-size:7.2px;color:#303038;">4.</div>
<div style="position:absolute;left:259.3px;top:151.72px;width:37.7px;height:11.8px;background:#fff;border:1px solid #9fb4d6;box-sizing:border-box;"></div>
<div style="position:absolute;left:286.5px;top:152.72px;width:1px;height:9.8px;background:#c4d0e4;"></div>
<div style="position:absolute;left:262.3px;top:153.32px;text-align:left;white-space:nowrap;font-size:7.1px;color:#202028;transform:scaleX(0.8);transform-origin:0 0;">PEQ</div>
<svg style="position:absolute;left:289.6px;top:156.52px" width="4.5" height="3" viewBox="0 0 4.5 3"><path d="M0 0 L4.5 0 L2.25 3 Z" fill="#000"/></svg>
<div style="position:absolute;left:303.4px;top:151.72px;width:37.6px;height:11.5px;background:#fff;border:1px solid #9fb4d6;box-sizing:border-box;"></div>
<div style="position:absolute;left:304.8px;top:153.12px;text-align:left;white-space:nowrap;font-size:6.8px;color:#303038;">512</div>
<svg style="position:absolute;left:330.8px;top:151.72px" width="10.5" height="11.5" viewBox="0 0 10.5 11.5">
<rect x="0" y="0.5" width="10.5" height="10.5" fill="#f2f2ee"/><rect x="0" y="5.2" width="10" height="1" fill="#909090"/>
<rect x="9.2" y="0" width="1.3" height="11.5" fill="#707078"/><rect x="0" y="10.6" width="10.5" height="0.9" fill="#8a8a90"/>
<circle cx="4.4" cy="3" r="0.8" fill="#222"/><circle cx="4.4" cy="8.4" r="0.8" fill="#222"/></svg>
<div style="position:absolute;left:346px;top:151.72px;width:30.4px;height:11.8px;background:#fff;border:1px solid #9fb4d6;box-sizing:border-box;"></div>
<div style="position:absolute;left:366px;top:152.72px;width:1px;height:9.8px;background:#c4d0e4;"></div>
<div style="position:absolute;left:348.5px;top:153.32px;text-align:left;white-space:nowrap;font-size:6.8px;color:#303038;letter-spacing:-0.2px;">7.208</div>
<svg style="position:absolute;left:368.9px;top:156.52px" width="4.5" height="3" viewBox="0 0 4.5 3"><path d="M0 0 L4.5 0 L2.25 3 Z" fill="#000"/></svg>
<div style="position:absolute;left:380.3px;top:151.72px;width:31.3px;height:11.8px;background:#fff;border:1px solid #9fb4d6;box-sizing:border-box;"></div>
<div style="position:absolute;left:381.6px;top:152.92px;text-align:left;white-space:nowrap;font-size:6.8px;color:#303038;">3.2</div>
<svg style="position:absolute;left:401.8px;top:151.72px" width="9.8" height="11.8" viewBox="0 0 9.8 11.8">
<rect x="0" y="0" width="9.8" height="11.8" fill="#c9d7ee"/>
<ellipse cx="4.9" cy="3.2" rx="3.6" ry="2.6" fill="#6f8ccb"/><path d="M3 4.2 L4.9 1.8 L6.8 4.2 Z" fill="#101018"/>
<ellipse cx="4.9" cy="8.6" rx="3.6" ry="2.6" fill="#6f8ccb"/><path d="M3 7.6 L4.9 10 L6.8 7.6 Z" fill="#101018"/>
</svg>
<div style="position:absolute;left:416px;top:154.02px;width:7.8px;height:7.8px;background:#f6f6f4;border:1px solid #9a9aa0;box-sizing:border-box;"></div>
<div style="position:absolute;left:425.6px;top:154.52px;text-align:left;white-space:nowrap;font-size:6.9px;color:#505058;letter-spacing:-0.5px;">Bypass</div>
<div style="position:absolute;left:250.5px;top:165.85999999999999px;text-align:left;white-space:nowrap;font-size:7.2px;color:#303038;">5.</div>
<div style="position:absolute;left:259.3px;top:164.76px;width:37.7px;height:11.8px;background:#fff;border:1px solid #9fb4d6;box-sizing:border-box;"></div>
<div style="position:absolute;left:286.5px;top:165.76px;width:1px;height:9.8px;background:#c4d0e4;"></div>
<div style="position:absolute;left:262.3px;top:166.35999999999999px;text-align:left;white-space:nowrap;font-size:7.1px;color:#202028;transform:scaleX(0.8);transform-origin:0 0;">PEQ</div>
<svg style="position:absolute;left:289.6px;top:169.56px" width="4.5" height="3" viewBox="0 0 4.5 3"><path d="M0 0 L4.5 0 L2.25 3 Z" fill="#000"/></svg>
<div style="position:absolute;left:303.4px;top:164.76px;width:37.6px;height:11.5px;background:#fff;border:1px solid #9fb4d6;box-sizing:border-box;"></div>
<div style="position:absolute;left:304.8px;top:166.16px;text-align:left;white-space:nowrap;font-size:6.8px;color:#303038;">975</div>
<svg style="position:absolute;left:330.8px;top:164.76px" width="10.5" height="11.5" viewBox="0 0 10.5 11.5">
<rect x="0" y="0.5" width="10.5" height="10.5" fill="#f2f2ee"/><rect x="0" y="5.2" width="10" height="1" fill="#909090"/>
<rect x="9.2" y="0" width="1.3" height="11.5" fill="#707078"/><rect x="0" y="10.6" width="10.5" height="0.9" fill="#8a8a90"/>
<circle cx="4.4" cy="3" r="0.8" fill="#222"/><circle cx="4.4" cy="8.4" r="0.8" fill="#222"/></svg>
<div style="position:absolute;left:346px;top:164.76px;width:30.4px;height:11.8px;background:#fff;border:1px solid #9fb4d6;box-sizing:border-box;"></div>
<div style="position:absolute;left:366px;top:165.76px;width:1px;height:9.8px;background:#c4d0e4;"></div>
<div style="position:absolute;left:348.5px;top:166.35999999999999px;text-align:left;white-space:nowrap;font-size:6.8px;color:#303038;letter-spacing:-0.2px;">7.208</div>
<svg style="position:absolute;left:368.9px;top:169.56px" width="4.5" height="3" viewBox="0 0 4.5 3"><path d="M0 0 L4.5 0 L2.25 3 Z" fill="#000"/></svg>
<div style="position:absolute;left:380.3px;top:164.76px;width:31.3px;height:11.8px;background:#fff;border:1px solid #9fb4d6;box-sizing:border-box;"></div>
<div style="position:absolute;left:381.6px;top:165.95999999999998px;text-align:left;white-space:nowrap;font-size:6.8px;color:#303038;">5.1</div>
<svg style="position:absolute;left:401.8px;top:164.76px" width="9.8" height="11.8" viewBox="0 0 9.8 11.8">
<rect x="0" y="0" width="9.8" height="11.8" fill="#c9d7ee"/>
<ellipse cx="4.9" cy="3.2" rx="3.6" ry="2.6" fill="#6f8ccb"/><path d="M3 4.2 L4.9 1.8 L6.8 4.2 Z" fill="#101018"/>
<ellipse cx="4.9" cy="8.6" rx="3.6" ry="2.6" fill="#6f8ccb"/><path d="M3 7.6 L4.9 10 L6.8 7.6 Z" fill="#101018"/>
</svg>
<div style="position:absolute;left:416px;top:167.06px;width:7.8px;height:7.8px;background:#f6f6f4;border:1px solid #9a9aa0;box-sizing:border-box;"></div>
<div style="position:absolute;left:425.6px;top:167.56px;text-align:left;white-space:nowrap;font-size:6.9px;color:#505058;letter-spacing:-0.5px;">Bypass</div>
<div style="position:absolute;left:250.5px;top:178.89999999999998px;text-align:left;white-space:nowrap;font-size:7.2px;color:#303038;">6.</div>
<div style="position:absolute;left:259.3px;top:177.79999999999998px;width:37.7px;height:11.8px;background:#fff;border:1px solid #9fb4d6;box-sizing:border-box;"></div>
<div style="position:absolute;left:286.5px;top:178.79999999999998px;width:1px;height:9.8px;background:#c4d0e4;"></div>
<div style="position:absolute;left:262.3px;top:179.39999999999998px;text-align:left;white-space:nowrap;font-size:7.1px;color:#202028;transform:scaleX(0.8);transform-origin:0 0;">PEQ</div>
<svg style="position:absolute;left:289.6px;top:182.60px" width="4.5" height="3" viewBox="0 0 4.5 3"><path d="M0 0 L4.5 0 L2.25 3 Z" fill="#000"/></svg>
<div style="position:absolute;left:303.4px;top:177.79999999999998px;width:37.6px;height:11.5px;background:#fff;border:1px solid #9fb4d6;box-sizing:border-box;"></div>
<div style="position:absolute;left:304.8px;top:179.2px;text-align:left;white-space:nowrap;font-size:6.8px;color:#303038;">2150</div>
<svg style="position:absolute;left:330.8px;top:177.80px" width="10.5" height="11.5" viewBox="0 0 10.5 11.5">
<rect x="0" y="0.5" width="10.5" height="10.5" fill="#f2f2ee"/><rect x="0" y="5.2" width="10" height="1" fill="#909090"/>
<rect x="9.2" y="0" width="1.3" height="11.5" fill="#707078"/><rect x="0" y="10.6" width="10.5" height="0.9" fill="#8a8a90"/>
<circle cx="4.4" cy="3" r="0.8" fill="#222"/><circle cx="4.4" cy="8.4" r="0.8" fill="#222"/></svg>
<div style="position:absolute;left:346px;top:177.79999999999998px;width:30.4px;height:11.8px;background:#fff;border:1px solid #9fb4d6;box-sizing:border-box;"></div>
<div style="position:absolute;left:366px;top:178.79999999999998px;width:1px;height:9.8px;background:#c4d0e4;"></div>
<div style="position:absolute;left:348.5px;top:179.39999999999998px;text-align:left;white-space:nowrap;font-size:6.8px;color:#303038;letter-spacing:-0.2px;">7.208</div>
<svg style="position:absolute;left:368.9px;top:182.60px" width="4.5" height="3" viewBox="0 0 4.5 3"><path d="M0 0 L4.5 0 L2.25 3 Z" fill="#000"/></svg>
<div style="position:absolute;left:380.3px;top:177.79999999999998px;width:31.3px;height:11.8px;background:#fff;border:1px solid #9fb4d6;box-sizing:border-box;"></div>
<div style="position:absolute;left:381.6px;top:178.99999999999997px;text-align:left;white-space:nowrap;font-size:6.8px;color:#303038;">6.0</div>
<svg style="position:absolute;left:401.8px;top:177.80px" width="9.8" height="11.8" viewBox="0 0 9.8 11.8">
<rect x="0" y="0" width="9.8" height="11.8" fill="#c9d7ee"/>
<ellipse cx="4.9" cy="3.2" rx="3.6" ry="2.6" fill="#6f8ccb"/><path d="M3 4.2 L4.9 1.8 L6.8 4.2 Z" fill="#101018"/>
<ellipse cx="4.9" cy="8.6" rx="3.6" ry="2.6" fill="#6f8ccb"/><path d="M3 7.6 L4.9 10 L6.8 7.6 Z" fill="#101018"/>
</svg>
<div style="position:absolute;left:416px;top:180.1px;width:7.8px;height:7.8px;background:#f6f6f4;border:1px solid #9a9aa0;box-sizing:border-box;"></div>
<div style="position:absolute;left:425.6px;top:180.6px;text-align:left;white-space:nowrap;font-size:6.9px;color:#505058;letter-spacing:-0.5px;">Bypass</div>
<div style="position:absolute;left:250.5px;top:191.93999999999997px;text-align:left;white-space:nowrap;font-size:7.2px;color:#303038;">7.</div>
<div style="position:absolute;left:259.3px;top:190.83999999999997px;width:37.7px;height:11.8px;background:#fff;border:1px solid #9fb4d6;box-sizing:border-box;"></div>
<div style="position:absolute;left:286.5px;top:191.83999999999997px;width:1px;height:9.8px;background:#c4d0e4;"></div>
<div style="position:absolute;left:262.3px;top:192.43999999999997px;text-align:left;white-space:nowrap;font-size:7.1px;color:#202028;transform:scaleX(0.8);transform-origin:0 0;">PEQ</div>
<svg style="position:absolute;left:289.6px;top:195.64px" width="4.5" height="3" viewBox="0 0 4.5 3"><path d="M0 0 L4.5 0 L2.25 3 Z" fill="#000"/></svg>
<div style="position:absolute;left:303.4px;top:190.83999999999997px;width:37.6px;height:11.5px;background:#fff;border:1px solid #9fb4d6;box-sizing:border-box;"></div>
<div style="position:absolute;left:304.8px;top:192.23999999999998px;text-align:left;white-space:nowrap;font-size:6.8px;color:#303038;">4053</div>
<svg style="position:absolute;left:330.8px;top:190.84px" width="10.5" height="11.5" viewBox="0 0 10.5 11.5">
<rect x="0" y="0.5" width="10.5" height="10.5" fill="#f2f2ee"/><rect x="0" y="5.2" width="10" height="1" fill="#909090"/>
<rect x="9.2" y="0" width="1.3" height="11.5" fill="#707078"/><rect x="0" y="10.6" width="10.5" height="0.9" fill="#8a8a90"/>
<circle cx="4.4" cy="3" r="0.8" fill="#222"/><circle cx="4.4" cy="8.4" r="0.8" fill="#222"/></svg>
<div style="position:absolute;left:346px;top:190.83999999999997px;width:30.4px;height:11.8px;background:#fff;border:1px solid #9fb4d6;box-sizing:border-box;"></div>
<div style="position:absolute;left:366px;top:191.83999999999997px;width:1px;height:9.8px;background:#c4d0e4;"></div>
<div style="position:absolute;left:348.5px;top:192.43999999999997px;text-align:left;white-space:nowrap;font-size:6.8px;color:#303038;letter-spacing:-0.2px;">7.208</div>
<svg style="position:absolute;left:368.9px;top:195.64px" width="4.5" height="3" viewBox="0 0 4.5 3"><path d="M0 0 L4.5 0 L2.25 3 Z" fill="#000"/></svg>
<div style="position:absolute;left:380.3px;top:190.83999999999997px;width:31.3px;height:11.8px;background:#fff;border:1px solid #9fb4d6;box-sizing:border-box;"></div>
<div style="position:absolute;left:381.6px;top:192.03999999999996px;text-align:left;white-space:nowrap;font-size:6.8px;color:#303038;">6.4</div>
<svg style="position:absolute;left:401.8px;top:190.84px" width="9.8" height="11.8" viewBox="0 0 9.8 11.8">
<rect x="0" y="0" width="9.8" height="11.8" fill="#c9d7ee"/>
<ellipse cx="4.9" cy="3.2" rx="3.6" ry="2.6" fill="#6f8ccb"/><path d="M3 4.2 L4.9 1.8 L6.8 4.2 Z" fill="#101018"/>
<ellipse cx="4.9" cy="8.6" rx="3.6" ry="2.6" fill="#6f8ccb"/><path d="M3 7.6 L4.9 10 L6.8 7.6 Z" fill="#101018"/>
</svg>
<div style="position:absolute;left:416px;top:193.14px;width:7.8px;height:7.8px;background:#f6f6f4;border:1px solid #9a9aa0;box-sizing:border-box;"></div>
<div style="position:absolute;left:425.6px;top:193.64px;text-align:left;white-space:nowrap;font-size:6.9px;color:#505058;letter-spacing:-0.5px;">Bypass</div>
<div style="position:absolute;left:250.5px;top:204.98px;text-align:left;white-space:nowrap;font-size:7.2px;color:#303038;">8.</div>
<div style="position:absolute;left:259.3px;top:203.88px;width:37.7px;height:11.8px;background:#fff;border:1px solid #9fb4d6;box-sizing:border-box;"></div>
<div style="position:absolute;left:286.5px;top:204.88px;width:1px;height:9.8px;background:#c4d0e4;"></div>
<div style="position:absolute;left:262.3px;top:205.48px;text-align:left;white-space:nowrap;font-size:7.1px;color:#202028;transform:scaleX(0.8);transform-origin:0 0;">PEQ</div>
<svg style="position:absolute;left:289.6px;top:208.68px" width="4.5" height="3" viewBox="0 0 4.5 3"><path d="M0 0 L4.5 0 L2.25 3 Z" fill="#000"/></svg>
<div style="position:absolute;left:303.4px;top:203.88px;width:37.6px;height:11.5px;background:#fff;border:1px solid #9fb4d6;box-sizing:border-box;"></div>
<div style="position:absolute;left:304.8px;top:205.28px;text-align:left;white-space:nowrap;font-size:6.8px;color:#303038;">8747</div>
<svg style="position:absolute;left:330.8px;top:203.88px" width="10.5" height="11.5" viewBox="0 0 10.5 11.5">
<rect x="0" y="0.5" width="10.5" height="10.5" fill="#f2f2ee"/><rect x="0" y="5.2" width="10" height="1" fill="#909090"/>
<rect x="9.2" y="0" width="1.3" height="11.5" fill="#707078"/><rect x="0" y="10.6" width="10.5" height="0.9" fill="#8a8a90"/>
<circle cx="4.4" cy="3" r="0.8" fill="#222"/><circle cx="4.4" cy="8.4" r="0.8" fill="#222"/></svg>
<div style="position:absolute;left:346px;top:203.88px;width:30.4px;height:11.8px;background:#fff;border:1px solid #9fb4d6;box-sizing:border-box;"></div>
<div style="position:absolute;left:366px;top:204.88px;width:1px;height:9.8px;background:#c4d0e4;"></div>
<div style="position:absolute;left:348.5px;top:205.48px;text-align:left;white-space:nowrap;font-size:6.8px;color:#303038;letter-spacing:-0.2px;">7.208</div>
<svg style="position:absolute;left:368.9px;top:208.68px" width="4.5" height="3" viewBox="0 0 4.5 3"><path d="M0 0 L4.5 0 L2.25 3 Z" fill="#000"/></svg>
<div style="position:absolute;left:380.3px;top:203.88px;width:31.3px;height:11.8px;background:#fff;border:1px solid #9fb4d6;box-sizing:border-box;"></div>
<div style="position:absolute;left:381.6px;top:205.07999999999998px;text-align:left;white-space:nowrap;font-size:6.8px;color:#303038;">7.4</div>
<svg style="position:absolute;left:401.8px;top:203.88px" width="9.8" height="11.8" viewBox="0 0 9.8 11.8">
<rect x="0" y="0" width="9.8" height="11.8" fill="#c9d7ee"/>
<ellipse cx="4.9" cy="3.2" rx="3.6" ry="2.6" fill="#6f8ccb"/><path d="M3 4.2 L4.9 1.8 L6.8 4.2 Z" fill="#101018"/>
<ellipse cx="4.9" cy="8.6" rx="3.6" ry="2.6" fill="#6f8ccb"/><path d="M3 7.6 L4.9 10 L6.8 7.6 Z" fill="#101018"/>
</svg>
<div style="position:absolute;left:416px;top:206.18px;width:7.8px;height:7.8px;background:#f6f6f4;border:1px solid #9a9aa0;box-sizing:border-box;"></div>
<div style="position:absolute;left:425.6px;top:206.68px;text-align:left;white-space:nowrap;font-size:6.9px;color:#505058;letter-spacing:-0.5px;">Bypass</div>
<svg style="position:absolute;left:0;top:0" width="457" height="337.2" viewBox="0 0 457 337.2"><rect x="52.6" y="264" width="397.4" height="90" fill="#000"/><line x1="63.3" y1="283.75" x2="428.6" y2="283.75" stroke="#285a28" stroke-width="0.9"/><line x1="63.3" y1="292.90" x2="428.6" y2="292.90" stroke="#285a28" stroke-width="0.9"/><line x1="63.3" y1="302.05" x2="428.6" y2="302.05" stroke="#285a28" stroke-width="0.9"/><line x1="63.3" y1="311.20" x2="428.6" y2="311.20" stroke="#285a28" stroke-width="0.9"/><line x1="63.3" y1="320.35" x2="428.6" y2="320.35" stroke="#285a28" stroke-width="0.9"/><line x1="63.3" y1="329.50" x2="428.6" y2="329.50" stroke="#285a28" stroke-width="0.9"/><line x1="63.3" y1="338.65" x2="428.6" y2="338.65" stroke="#285a28" stroke-width="0.9"/><line x1="63.3" y1="347.80" x2="428.6" y2="347.80" stroke="#285a28" stroke-width="0.9"/><line x1="84.27" y1="274.6" x2="84.27" y2="360" stroke="#285a28" stroke-width="0.9"/><line x1="99.15" y1="274.6" x2="99.15" y2="360" stroke="#285a28" stroke-width="0.9"/><line x1="110.69" y1="274.6" x2="110.69" y2="360" stroke="#285a28" stroke-width="0.9"/><line x1="120.13" y1="274.6" x2="120.13" y2="360" stroke="#285a28" stroke-width="0.9"/><line x1="128.10" y1="274.6" x2="128.10" y2="360" stroke="#285a28" stroke-width="0.9"/><line x1="135.01" y1="274.6" x2="135.01" y2="360" stroke="#285a28" stroke-width="0.9"/><line x1="141.10" y1="274.6" x2="141.10" y2="360" stroke="#285a28" stroke-width="0.9"/><line x1="146.55" y1="274.6" x2="146.55" y2="360" stroke="#285a28" stroke-width="0.9"/><line x1="182.40" y1="274.6" x2="182.40" y2="360" stroke="#285a28" stroke-width="0.9"/><line x1="203.37" y1="274.6" x2="203.37" y2="360" stroke="#285a28" stroke-width="0.9"/><line x1="218.25" y1="274.6" x2="218.25" y2="360" stroke="#285a28" stroke-width="0.9"/><line x1="229.79" y1="274.6" x2="229.79" y2="360" stroke="#285a28" stroke-width="0.9"/><line x1="239.23" y1="274.6" x2="239.23" y2="360" stroke="#285a28" stroke-width="0.9"/><line x1="247.20" y1="274.6" x2="247.20" y2="360" stroke="#285a28" stroke-width="0.9"/><line x1="254.11" y1="274.6" x2="254.11" y2="360" stroke="#285a28" stroke-width="0.9"/><line x1="260.20" y1="274.6" x2="260.20" y2="360" stroke="#285a28" stroke-width="0.9"/><line x1="265.65" y1="274.6" x2="265.65" y2="360" stroke="#285a28" stroke-width="0.9"/><line x1="301.50" y1="274.6" x2="301.50" y2="360" stroke="#285a28" stroke-width="0.9"/><line x1="322.47" y1="274.6" x2="322.47" y2="360" stroke="#285a28" stroke-width="0.9"/><line x1="337.35" y1="274.6" x2="337.35" y2="360" stroke="#285a28" stroke-width="0.9"/><line x1="348.89" y1="274.6" x2="348.89" y2="360" stroke="#285a28" stroke-width="0.9"/><line x1="358.33" y1="274.6" x2="358.33" y2="360" stroke="#285a28" stroke-width="0.9"/><line x1="366.30" y1="274.6" x2="366.30" y2="360" stroke="#285a28" stroke-width="0.9"/><line x1="373.21" y1="274.6" x2="373.21" y2="360" stroke="#285a28" stroke-width="0.9"/><line x1="379.30" y1="274.6" x2="379.30" y2="360" stroke="#285a28" stroke-width="0.9"/><line x1="384.75" y1="274.6" x2="384.75" y2="360" stroke="#285a28" stroke-width="0.9"/><line x1="420.60" y1="274.6" x2="420.60" y2="360" stroke="#285a28" stroke-width="0.9"/><path d="M63.3 360 L63.3 274.6 L428.6 274.6 L428.6 360" fill="none" stroke="#1fa01f" stroke-width="1.4"/><text x="432.7" y="276.90" font-family="Liberation Sans" font-size="6.2" letter-spacing="-0.3" fill="#c4c4c4">18dB</text><text x="432.7" y="295.20" font-family="Liberation Sans" font-size="6.2" letter-spacing="-0.3" fill="#c4c4c4">12dB</text><text x="432.7" y="313.50" font-family="Liberation Sans" font-size="6.2" letter-spacing="-0.3" fill="#c4c4c4">6dB</text><text x="432.7" y="331.80" font-family="Liberation Sans" font-size="6.2" letter-spacing="-0.3" fill="#c4c4c4">0dB</text><path d="M105.80 329.5 L105.80 329.40 L106.53 329.39 L107.26 329.38 L108.00 329.37 L108.73 329.35 L109.46 329.34 L110.20 329.32 L110.93 329.29 L111.66 329.27 L112.39 329.23 L113.13 329.19 L113.86 329.14 L114.59 329.08 L115.32 329.00 L116.06 328.91 L116.79 328.78 L117.52 328.62 L118.26 328.43 L118.99 328.19 L119.72 327.91 L120.45 327.64 L121.19 327.43 L121.92 327.37 L122.65 327.47 L123.38 327.71 L124.12 327.99 L124.85 328.25 L125.58 328.48 L126.32 328.67 L127.05 328.82 L127.78 328.93 L128.51 329.03 L129.25 329.10 L129.98 329.16 L130.71 329.20 L131.44 329.24 L132.18 329.27 L132.91 329.30 L133.64 329.32 L134.38 329.34 L135.11 329.36 L135.84 329.37 L136.57 329.38 L137.31 329.39 L138.04 329.40 L138.04 329.5 Z" fill="rgba(150,90,40,0.8)"/><path d="M141.70 329.5 L141.70 329.40 L142.44 329.39 L143.17 329.38 L143.90 329.37 L144.63 329.36 L145.37 329.35 L146.10 329.33 L146.83 329.32 L147.57 329.30 L148.30 329.28 L149.03 329.25 L149.76 329.22 L150.50 329.18 L151.23 329.13 L151.96 329.08 L152.69 329.01 L153.43 328.93 L154.16 328.83 L154.89 328.70 L155.63 328.54 L156.36 328.33 L157.09 328.07 L157.82 327.75 L158.56 327.37 L159.29 326.97 L160.02 326.63 L160.75 326.46 L161.49 326.53 L162.22 326.81 L162.95 327.20 L163.69 327.59 L164.42 327.94 L165.15 328.23 L165.88 328.46 L166.62 328.64 L167.35 328.78 L168.08 328.89 L168.81 328.98 L169.55 329.05 L170.28 329.11 L171.01 329.16 L171.75 329.20 L172.48 329.24 L173.21 329.26 L173.94 329.29 L174.68 329.31 L175.41 329.33 L176.14 329.34 L176.87 329.36 L177.61 329.37 L178.34 329.38 L179.07 329.39 L179.81 329.40 L180.54 329.41 L180.54 329.5 Z" fill="rgba(110,40,160,0.8)"/><path d="M171.75 329.5 L171.75 329.41 L172.48 329.40 L173.21 329.39 L173.94 329.39 L174.68 329.38 L175.41 329.37 L176.14 329.36 L176.87 329.35 L177.61 329.34 L178.34 329.32 L179.07 329.31 L179.81 329.29 L180.54 329.28 L181.27 329.25 L182.00 329.23 L182.74 329.20 L183.47 329.17 L184.20 329.14 L184.93 329.09 L185.67 329.04 L186.40 328.98 L187.13 328.91 L187.87 328.83 L188.60 328.73 L189.33 328.60 L190.06 328.44 L190.80 328.25 L191.53 328.00 L192.26 327.69 L192.99 327.29 L193.73 326.79 L194.46 326.18 L195.19 325.51 L195.93 324.86 L196.66 324.41 L197.39 324.34 L198.12 324.67 L198.86 325.27 L199.59 325.96 L200.32 326.59 L201.06 327.13 L201.79 327.56 L202.52 327.90 L203.25 328.17 L203.99 328.38 L204.72 328.55 L205.45 328.69 L206.18 328.80 L206.92 328.89 L207.65 328.96 L208.38 329.02 L209.12 329.08 L209.85 329.12 L210.58 329.16 L211.31 329.19 L212.05 329.22 L212.78 329.25 L213.51 329.27 L214.24 329.29 L214.98 329.30 L215.71 329.32 L216.44 329.33 L217.18 329.35 L217.91 329.36 L218.64 329.37 L219.37 329.38 L220.11 329.38 L220.84 329.39 L221.57 329.40 L222.30 329.40 L222.30 329.5 Z" fill="rgba(40,160,170,0.8)"/><path d="M196.66 329.5 L196.66 329.41 L197.39 329.40 L198.12 329.40 L198.86 329.39 L199.59 329.39 L200.32 329.38 L201.06 329.37 L201.79 329.37 L202.52 329.36 L203.25 329.35 L203.99 329.34 L204.72 329.33 L205.45 329.32 L206.18 329.31 L206.92 329.30 L207.65 329.29 L208.38 329.27 L209.12 329.25 L209.85 329.24 L210.58 329.22 L211.31 329.19 L212.05 329.17 L212.78 329.14 L213.51 329.11 L214.24 329.08 L214.98 329.04 L215.71 329.00 L216.44 328.95 L217.18 328.89 L217.91 328.82 L218.64 328.74 L219.37 328.65 L220.11 328.55 L220.84 328.42 L221.57 328.26 L222.30 328.08 L223.04 327.85 L223.77 327.57 L224.50 327.22 L225.24 326.78 L225.97 326.22 L226.70 325.51 L227.43 324.62 L228.17 323.54 L228.90 322.29 L229.63 321.03 L230.36 320.06 L231.10 319.74 L231.83 320.22 L232.56 321.28 L233.30 322.56 L234.03 323.78 L234.76 324.82 L235.49 325.67 L236.23 326.35 L236.96 326.88 L237.69 327.30 L238.42 327.63 L239.16 327.90 L239.89 328.12 L240.62 328.30 L241.36 328.45 L242.09 328.57 L242.82 328.67 L243.55 328.76 L244.29 328.84 L245.02 328.90 L245.75 328.96 L246.48 329.01 L247.22 329.05 L247.95 329.09 L248.68 329.12 L249.42 329.15 L250.15 329.18 L250.88 329.20 L251.61 329.22 L252.35 329.24 L253.08 329.26 L253.81 329.27 L254.55 329.29 L255.28 329.30 L256.01 329.31 L256.74 329.32 L257.48 329.33 L258.21 329.34 L258.94 329.35 L259.67 329.36 L260.41 329.37 L261.14 329.38 L261.87 329.38 L262.61 329.39 L263.34 329.39 L264.07 329.40 L264.80 329.40 L265.54 329.41 L265.54 329.5 Z" fill="rgba(30,160,30,0.85)"/><path d="M221.57 329.5 L221.57 329.41 L222.30 329.40 L223.04 329.40 L223.77 329.40 L224.50 329.39 L225.24 329.39 L225.97 329.38 L226.70 329.38 L227.43 329.37 L228.17 329.36 L228.90 329.36 L229.63 329.35 L230.36 329.34 L231.10 329.33 L231.83 329.33 L232.56 329.32 L233.30 329.31 L234.03 329.30 L234.76 329.29 L235.49 329.27 L236.23 329.26 L236.96 329.25 L237.69 329.23 L238.42 329.22 L239.16 329.20 L239.89 329.18 L240.62 329.16 L241.36 329.13 L242.09 329.11 L242.82 329.08 L243.55 329.05 L244.29 329.02 L245.02 328.98 L245.75 328.94 L246.48 328.89 L247.22 328.84 L247.95 328.78 L248.68 328.71 L249.42 328.63 L250.15 328.54 L250.88 328.44 L251.61 328.32 L252.35 328.19 L253.08 328.03 L253.81 327.84 L254.55 327.61 L255.28 327.33 L256.01 327.00 L256.74 326.59 L257.48 326.09 L258.21 325.46 L258.94 324.67 L259.67 323.67 L260.41 322.42 L261.14 320.86 L261.87 319.00 L262.61 316.97 L263.34 315.12 L264.07 314.04 L264.80 314.22 L265.54 315.57 L266.27 317.52 L267.00 319.53 L267.73 321.31 L268.47 322.79 L269.20 323.97 L269.93 324.90 L270.67 325.65 L271.40 326.24 L272.13 326.71 L272.86 327.10 L273.60 327.41 L274.33 327.67 L275.06 327.89 L275.79 328.07 L276.53 328.23 L277.26 328.36 L277.99 328.47 L278.73 328.57 L279.46 328.65 L280.19 328.73 L280.92 328.79 L281.66 328.85 L282.39 328.90 L283.12 328.95 L283.85 328.99 L284.59 329.03 L285.32 329.06 L286.05 329.09 L286.79 329.12 L287.52 329.14 L288.25 329.16 L288.98 329.18 L289.72 329.20 L290.45 329.22 L291.18 329.24 L291.91 329.25 L292.65 329.26 L293.38 329.28 L294.11 329.29 L294.85 329.30 L295.58 329.31 L296.31 329.32 L297.04 329.33 L297.78 329.34 L298.51 329.34 L299.24 329.35 L299.97 329.36 L300.71 329.37 L301.44 329.37 L302.17 329.38 L302.91 329.38 L303.64 329.39 L304.37 329.39 L305.10 329.40 L305.84 329.40 L306.57 329.41 L306.57 329.5 Z" fill="rgba(130,130,20,0.85)"/><path d="M259.67 329.5 L259.67 329.41 L260.41 329.40 L261.14 329.40 L261.87 329.39 L262.61 329.39 L263.34 329.38 L264.07 329.38 L264.80 329.37 L265.54 329.37 L266.27 329.36 L267.00 329.36 L267.73 329.35 L268.47 329.34 L269.20 329.33 L269.93 329.33 L270.67 329.32 L271.40 329.31 L272.13 329.30 L272.86 329.29 L273.60 329.28 L274.33 329.27 L275.06 329.25 L275.79 329.24 L276.53 329.23 L277.26 329.21 L277.99 329.19 L278.73 329.17 L279.46 329.15 L280.19 329.13 L280.92 329.11 L281.66 329.08 L282.39 329.06 L283.12 329.02 L283.85 328.99 L284.59 328.95 L285.32 328.91 L286.05 328.87 L286.79 328.81 L287.52 328.76 L288.25 328.69 L288.98 328.62 L289.72 328.54 L290.45 328.44 L291.18 328.33 L291.91 328.21 L292.65 328.07 L293.38 327.90 L294.11 327.70 L294.85 327.47 L295.58 327.19 L296.31 326.85 L297.04 326.45 L297.78 325.95 L298.51 325.33 L299.24 324.56 L299.97 323.60 L300.71 322.39 L301.44 320.86 L302.17 318.99 L302.91 316.77 L303.64 314.38 L304.37 312.28 L305.10 311.23 L305.84 311.73 L306.57 313.52 L307.30 315.88 L308.03 318.19 L308.77 320.21 L309.50 321.86 L310.23 323.18 L310.97 324.23 L311.70 325.07 L312.43 325.73 L313.16 326.27 L313.90 326.71 L314.63 327.07 L315.36 327.37 L316.10 327.62 L316.83 327.83 L317.56 328.01 L318.29 328.16 L319.03 328.29 L319.76 328.40 L320.49 328.50 L321.22 328.59 L321.96 328.67 L322.69 328.73 L323.42 328.79 L324.16 328.85 L324.89 328.89 L325.62 328.94 L326.35 328.98 L327.09 329.01 L327.82 329.04 L328.55 329.07 L329.28 329.10 L330.02 329.12 L330.75 329.15 L331.48 329.17 L332.22 329.19 L332.95 329.20 L333.68 329.22 L334.41 329.23 L335.15 329.25 L335.88 329.26 L336.61 329.27 L337.34 329.29 L338.08 329.30 L338.81 329.31 L339.54 329.31 L340.28 329.32 L341.01 329.33 L341.74 329.34 L342.47 329.35 L343.21 329.35 L343.94 329.36 L344.67 329.37 L345.40 329.37 L346.14 329.38 L346.87 329.38 L347.60 329.39 L348.34 329.39 L349.07 329.40 L349.80 329.40 L350.53 329.40 L351.27 329.41 L351.27 329.5 Z" fill="rgba(130,20,150,0.85)"/><path d="M290.45 329.5 L290.45 329.41 L291.18 329.40 L291.91 329.40 L292.65 329.40 L293.38 329.39 L294.11 329.39 L294.85 329.38 L295.58 329.38 L296.31 329.37 L297.04 329.37 L297.78 329.36 L298.51 329.36 L299.24 329.35 L299.97 329.34 L300.71 329.34 L301.44 329.33 L302.17 329.32 L302.91 329.31 L303.64 329.30 L304.37 329.29 L305.10 329.28 L305.84 329.27 L306.57 329.26 L307.30 329.25 L308.03 329.23 L308.77 329.22 L309.50 329.20 L310.23 329.18 L310.97 329.16 L311.70 329.14 L312.43 329.12 L313.16 329.10 L313.90 329.07 L314.63 329.04 L315.36 329.01 L316.10 328.98 L316.83 328.94 L317.56 328.90 L318.29 328.85 L319.03 328.80 L319.76 328.75 L320.49 328.68 L321.22 328.61 L321.96 328.53 L322.69 328.44 L323.42 328.33 L324.16 328.21 L324.89 328.08 L325.62 327.92 L326.35 327.73 L327.09 327.51 L327.82 327.25 L328.55 326.94 L329.28 326.56 L330.02 326.10 L330.75 325.54 L331.48 324.85 L332.22 323.99 L332.95 322.90 L333.68 321.54 L334.41 319.83 L335.15 317.74 L335.88 315.31 L336.61 312.78 L337.34 310.73 L338.08 309.98 L338.81 310.92 L339.54 313.07 L340.28 315.61 L341.01 318.01 L341.74 320.05 L342.47 321.72 L343.21 323.04 L343.94 324.10 L344.67 324.94 L345.40 325.62 L346.14 326.16 L346.87 326.61 L347.60 326.98 L348.34 327.28 L349.07 327.54 L349.80 327.75 L350.53 327.94 L351.27 328.09 L352.00 328.23 L352.73 328.35 L353.46 328.45 L354.20 328.54 L354.93 328.62 L355.66 328.69 L356.40 328.75 L357.13 328.81 L357.86 328.86 L358.59 328.91 L359.33 328.95 L360.06 328.98 L360.79 329.02 L361.52 329.05 L362.26 329.08 L362.99 329.10 L363.72 329.13 L364.46 329.15 L365.19 329.17 L365.92 329.19 L366.65 329.20 L367.39 329.22 L368.12 329.23 L368.85 329.25 L369.59 329.26 L370.32 329.27 L371.05 329.28 L371.78 329.29 L372.52 329.30 L373.25 329.31 L373.98 329.32 L374.71 329.33 L375.45 329.34 L376.18 329.34 L376.91 329.35 L377.65 329.36 L378.38 329.36 L379.11 329.37 L379.84 329.37 L380.58 329.38 L381.31 329.38 L382.04 329.39 L382.77 329.39 L383.51 329.40 L384.24 329.40 L384.97 329.41 L384.97 329.5 Z" fill="rgba(210,210,20,0.9)"/><path d="M327.09 329.5 L327.09 329.41 L327.82 329.40 L328.55 329.40 L329.28 329.40 L330.02 329.39 L330.75 329.39 L331.48 329.38 L332.22 329.38 L332.95 329.37 L333.68 329.37 L334.41 329.36 L335.15 329.36 L335.88 329.35 L336.61 329.34 L337.34 329.34 L338.08 329.33 L338.81 329.32 L339.54 329.32 L340.28 329.31 L341.01 329.30 L341.74 329.29 L342.47 329.28 L343.21 329.27 L343.94 329.26 L344.67 329.24 L345.40 329.23 L346.14 329.22 L346.87 329.20 L347.60 329.19 L348.34 329.17 L349.07 329.15 L349.80 329.13 L350.53 329.11 L351.27 329.08 L352.00 329.06 L352.73 329.03 L353.46 329.00 L354.20 328.97 L354.93 328.93 L355.66 328.89 L356.40 328.85 L357.13 328.80 L357.86 328.75 L358.59 328.69 L359.33 328.63 L360.06 328.55 L360.79 328.47 L361.52 328.38 L362.26 328.28 L362.99 328.16 L363.72 328.02 L364.46 327.87 L365.19 327.69 L365.92 327.48 L366.65 327.23 L367.39 326.94 L368.12 326.60 L368.85 326.18 L369.59 325.68 L370.32 325.07 L371.05 324.32 L371.78 323.39 L372.52 322.23 L373.25 320.77 L373.98 318.95 L374.71 316.70 L375.45 314.03 L376.18 311.09 L376.91 308.43 L377.65 306.99 L378.38 307.52 L379.11 309.72 L379.84 312.61 L380.58 315.45 L381.31 317.92 L382.04 319.94 L382.77 321.56 L383.51 322.86 L384.24 323.90 L384.97 324.73 L385.71 325.40 L386.44 325.95 L387.17 326.41 L387.90 326.78 L388.64 327.10 L389.37 327.36 L390.10 327.59 L390.83 327.78 L391.57 327.95 L392.30 328.09 L393.03 328.22 L393.77 328.33 L394.50 328.43 L395.23 328.52 L395.96 328.59 L396.70 328.66 L397.43 328.72 L398.16 328.78 L398.89 328.83 L399.63 328.87 L400.36 328.91 L401.09 328.95 L401.83 328.99 L402.56 329.02 L403.29 329.05 L404.02 329.07 L404.76 329.10 L405.49 329.12 L406.22 329.14 L406.95 329.16 L407.69 329.18 L408.42 329.19 L409.15 329.21 L409.89 329.22 L410.62 329.24 L411.35 329.25 L412.08 329.26 L412.82 329.27 L413.55 329.28 L414.28 329.29 L415.01 329.30 L415.75 329.31 L416.48 329.32 L417.21 329.33 L417.95 329.33 L418.68 329.34 L419.41 329.35 L420.14 329.35 L420.88 329.36 L421.61 329.37 L422.34 329.37 L423.08 329.38 L423.81 329.38 L424.54 329.39 L425.27 329.39 L426.01 329.39 L426.74 329.40 L427.47 329.40 L428.20 329.41 L428.20 329.5 Z" fill="rgba(70,180,50,0.9)"/><circle cx="121.82" cy="327.37" r="4.3" fill="#b0703c" fill-opacity="0.42" stroke="#b0703c" stroke-width="1.8" stroke-opacity="0.75"/><circle cx="160.91" cy="326.45" r="4.3" fill="#6a2ab0" fill-opacity="0.42" stroke="#6a2ab0" stroke-width="1.8" stroke-opacity="0.75"/><circle cx="197.15" cy="324.31" r="4.3" fill="#2aa6b8" fill-opacity="0.42" stroke="#2aa6b8" stroke-width="1.8" stroke-opacity="0.75"/><circle cx="231.02" cy="319.74" r="4.3" fill="#26a626" fill-opacity="0.42" stroke="#26a626" stroke-width="1.8" stroke-opacity="0.75"/><circle cx="264.34" cy="313.94" r="4.3" fill="#8c9a28" fill-opacity="0.42" stroke="#8c9a28" stroke-width="1.8" stroke-opacity="0.75"/><circle cx="305.24" cy="311.20" r="4.3" fill="#8a2aa8" fill-opacity="0.42" stroke="#8a2aa8" stroke-width="1.8" stroke-opacity="0.75"/><circle cx="338.03" cy="309.98" r="4.3" fill="#d8d820" fill-opacity="0.42" stroke="#d8d820" stroke-width="1.8" stroke-opacity="0.75"/><circle cx="377.82" cy="306.93" r="4.3" fill="#48b038" fill-opacity="0.42" stroke="#48b038" stroke-width="1.8" stroke-opacity="0.75"/><path d="M63.30 329.49 L64.03 329.49 L64.77 329.49 L65.50 329.49 L66.23 329.49 L66.96 329.49 L67.70 329.49 L68.43 329.49 L69.16 329.49 L69.89 329.49 L70.63 329.49 L71.36 329.49 L72.09 329.49 L72.83 329.49 L73.56 329.49 L74.29 329.49 L75.02 329.49 L75.76 329.49 L76.49 329.49 L77.22 329.48 L77.95 329.48 L78.69 329.48 L79.42 329.48 L80.15 329.48 L80.89 329.48 L81.62 329.48 L82.35 329.48 L83.08 329.48 L83.82 329.48 L84.55 329.48 L85.28 329.48 L86.01 329.48 L86.75 329.47 L87.48 329.47 L88.21 329.47 L88.95 329.47 L89.68 329.47 L90.41 329.47 L91.14 329.47 L91.88 329.46 L92.61 329.46 L93.34 329.46 L94.08 329.46 L94.81 329.46 L95.54 329.45 L96.27 329.45 L97.01 329.45 L97.74 329.45 L98.47 329.44 L99.20 329.44 L99.94 329.44 L100.67 329.43 L101.40 329.43 L102.14 329.42 L102.87 329.42 L103.60 329.41 L104.33 329.40 L105.07 329.40 L105.80 329.39 L106.53 329.38 L107.26 329.37 L108.00 329.35 L108.73 329.34 L109.46 329.32 L110.20 329.30 L110.93 329.28 L111.66 329.25 L112.39 329.21 L113.13 329.17 L113.86 329.12 L114.59 329.06 L115.32 328.98 L116.06 328.88 L116.79 328.76 L117.52 328.60 L118.26 328.40 L118.99 328.16 L119.72 327.88 L120.45 327.61 L121.19 327.40 L121.92 327.33 L122.65 327.44 L123.38 327.67 L124.12 327.95 L124.85 328.22 L125.58 328.44 L126.32 328.63 L127.05 328.77 L127.78 328.89 L128.51 328.98 L129.25 329.05 L129.98 329.10 L130.71 329.15 L131.44 329.19 L132.18 329.21 L132.91 329.24 L133.64 329.26 L134.38 329.27 L135.11 329.29 L135.84 329.30 L136.57 329.30 L137.31 329.31 L138.04 329.31 L138.77 329.32 L139.50 329.32 L140.24 329.32 L140.97 329.31 L141.70 329.31 L142.44 329.31 L143.17 329.30 L143.90 329.29 L144.63 329.29 L145.37 329.27 L146.10 329.26 L146.83 329.25 L147.57 329.23 L148.30 329.21 L149.03 329.18 L149.76 329.15 L150.50 329.11 L151.23 329.07 L151.96 329.01 L152.69 328.95 L153.43 328.86 L154.16 328.76 L154.89 328.63 L155.63 328.47 L156.36 328.26 L157.09 328.00 L157.82 327.67 L158.56 327.29 L159.29 326.89 L160.02 326.55 L160.75 326.38 L161.49 326.45 L162.22 326.73 L162.95 327.11 L163.69 327.50 L164.42 327.85 L165.15 328.13 L165.88 328.36 L166.62 328.54 L167.35 328.67 L168.08 328.78 L168.81 328.87 L169.55 328.93 L170.28 328.99 L171.01 329.03 L171.75 329.06 L172.48 329.09 L173.21 329.11 L173.94 329.13 L174.68 329.14 L175.41 329.15 L176.14 329.15 L176.87 329.15 L177.61 329.15 L178.34 329.15 L179.07 329.14 L179.81 329.13 L180.54 329.12 L181.27 329.10 L182.00 329.09 L182.74 329.06 L183.47 329.03 L184.20 329.00 L184.93 328.96 L185.67 328.91 L186.40 328.85 L187.13 328.78 L187.87 328.70 L188.60 328.60 L189.33 328.47 L190.06 328.31 L190.80 328.11 L191.53 327.86 L192.26 327.55 L192.99 327.15 L193.73 326.65 L194.46 326.04 L195.19 325.36 L195.93 324.71 L196.66 324.25 L197.39 324.18 L198.12 324.51 L198.86 325.10 L199.59 325.78 L200.32 326.41 L201.06 326.94 L201.79 327.36 L202.52 327.69 L203.25 327.95 L203.99 328.16 L204.72 328.32 L205.45 328.44 L206.18 328.54 L206.92 328.61 L207.65 328.67 L208.38 328.72 L209.12 328.76 L209.85 328.78 L210.58 328.80 L211.31 328.81 L212.05 328.81 L212.78 328.81 L213.51 328.79 L214.24 328.78 L214.98 328.75 L215.71 328.72 L216.44 328.68 L217.18 328.63 L217.91 328.57 L218.64 328.50 L219.37 328.42 L220.11 328.31 L220.84 328.19 L221.57 328.04 L222.30 327.86 L223.04 327.63 L223.77 327.35 L224.50 327.00 L225.24 326.56 L225.97 326.00 L226.70 325.29 L227.43 324.39 L228.17 323.31 L228.90 322.05 L229.63 320.79 L230.36 319.82 L231.10 319.49 L231.83 319.96 L232.56 321.01 L233.30 322.28 L234.03 323.49 L234.76 324.53 L235.49 325.36 L236.23 326.03 L236.96 326.54 L237.69 326.95 L238.42 327.27 L239.16 327.52 L239.89 327.72 L240.62 327.87 L241.36 328.00 L242.09 328.10 L242.82 328.17 L243.55 328.23 L244.29 328.27 L245.02 328.29 L245.75 328.31 L246.48 328.31 L247.22 328.30 L247.95 328.27 L248.68 328.24 L249.42 328.19 L250.15 328.12 L250.88 328.04 L251.61 327.95 L252.35 327.83 L253.08 327.68 L253.81 327.50 L254.55 327.29 L255.28 327.02 L256.01 326.70 L256.74 326.30 L257.48 325.80 L258.21 325.18 L258.94 324.39 L259.67 323.40 L260.41 322.15 L261.14 320.59 L261.87 318.74 L262.61 316.71 L263.34 314.85 L264.07 313.77 L264.80 313.95 L265.54 315.30 L266.27 317.25 L267.00 319.26 L267.73 321.04 L268.47 322.50 L269.20 323.68 L269.93 324.61 L270.67 325.35 L271.40 325.93 L272.13 326.40 L272.86 326.77 L273.60 327.08 L274.33 327.33 L275.06 327.53 L275.79 327.70 L276.53 327.84 L277.26 327.96 L277.99 328.05 L278.73 328.13 L279.46 328.20 L280.19 328.25 L280.92 328.29 L281.66 328.32 L282.39 328.34 L283.12 328.36 L283.85 328.36 L284.59 328.36 L285.32 328.35 L286.05 328.33 L286.79 328.31 L287.52 328.27 L288.25 328.23 L288.98 328.17 L289.72 328.10 L290.45 328.03 L291.18 327.93 L291.91 327.82 L292.65 327.68 L293.38 327.52 L294.11 327.33 L294.85 327.11 L295.58 326.83 L296.31 326.50 L297.04 326.10 L297.78 325.60 L298.51 324.99 L299.24 324.22 L299.97 323.26 L300.71 322.04 L301.44 320.52 L302.17 318.64 L302.91 316.41 L303.64 314.02 L304.37 311.92 L305.10 310.86 L305.84 311.35 L306.57 313.14 L307.30 315.48 L308.03 317.79 L308.77 319.79 L309.50 321.42 L310.23 322.73 L310.97 323.77 L311.70 324.58 L312.43 325.23 L313.16 325.75 L313.90 326.16 L314.63 326.49 L315.36 326.76 L316.10 326.98 L316.83 327.15 L317.56 327.29 L318.29 327.39 L319.03 327.47 L319.76 327.53 L320.49 327.56 L321.22 327.58 L321.96 327.57 L322.69 327.55 L323.42 327.50 L324.16 327.44 L324.89 327.34 L325.62 327.23 L326.35 327.08 L327.09 326.89 L327.82 326.66 L328.55 326.37 L329.28 326.02 L330.02 325.59 L330.75 325.04 L331.48 324.37 L332.22 323.52 L332.95 322.45 L333.68 321.10 L334.41 319.40 L335.15 317.32 L335.88 314.90 L336.61 312.37 L337.34 310.33 L338.08 309.59 L338.81 310.53 L339.54 312.68 L340.28 315.22 L341.01 317.62 L341.74 319.66 L342.47 321.32 L343.21 322.64 L343.94 323.70 L344.67 324.53 L345.40 325.20 L346.14 325.74 L346.87 326.18 L347.60 326.53 L348.34 326.82 L349.07 327.07 L349.80 327.27 L350.53 327.43 L351.27 327.57 L352.00 327.69 L352.73 327.78 L353.46 327.86 L354.20 327.92 L354.93 327.97 L355.66 328.00 L356.40 328.02 L357.13 328.03 L357.86 328.03 L358.59 328.02 L359.33 328.00 L360.06 327.97 L360.79 327.92 L361.52 327.86 L362.26 327.79 L362.99 327.70 L363.72 327.59 L364.46 327.46 L365.19 327.30 L365.92 327.11 L366.65 326.88 L367.39 326.61 L368.12 326.28 L368.85 325.88 L369.59 325.40 L370.32 324.80 L371.05 324.06 L371.78 323.14 L372.52 321.99 L373.25 320.55 L373.98 318.73 L374.71 316.50 L375.45 313.83 L376.18 310.90 L376.91 308.25 L377.65 306.82 L378.38 307.35 L379.11 309.56 L379.84 312.46 L380.58 315.31 L381.31 317.77 L382.04 319.80 L382.77 321.43 L383.51 322.73 L384.24 323.77 L384.97 324.61 L385.71 325.29 L386.44 325.84 L387.17 326.30 L387.90 326.68 L388.64 327.00 L389.37 327.27 L390.10 327.50 L390.83 327.70 L391.57 327.87 L392.30 328.01 L393.03 328.14 L393.77 328.26 L394.50 328.36 L395.23 328.44 L395.96 328.52 L396.70 328.59 L397.43 328.66 L398.16 328.72 L398.89 328.77 L399.63 328.82 L400.36 328.86 L401.09 328.90 L401.83 328.93 L402.56 328.97 L403.29 329.00 L404.02 329.02 L404.76 329.05 L405.49 329.07 L406.22 329.10 L406.95 329.12 L407.69 329.14 L408.42 329.15 L409.15 329.17 L409.89 329.19 L410.62 329.20 L411.35 329.22 L412.08 329.23 L412.82 329.24 L413.55 329.25 L414.28 329.26 L415.01 329.27 L415.75 329.28 L416.48 329.29 L417.21 329.30 L417.95 329.31 L418.68 329.32 L419.41 329.32 L420.14 329.33 L420.88 329.34 L421.61 329.34 L422.34 329.35 L423.08 329.35 L423.81 329.36 L424.54 329.37 L425.27 329.37 L426.01 329.38 L426.74 329.38 L427.47 329.38 L428.20 329.39 L428.94 329.39" fill="none" stroke="#ff1a1a" stroke-width="2"/></svg>
</div>
</body></html>
